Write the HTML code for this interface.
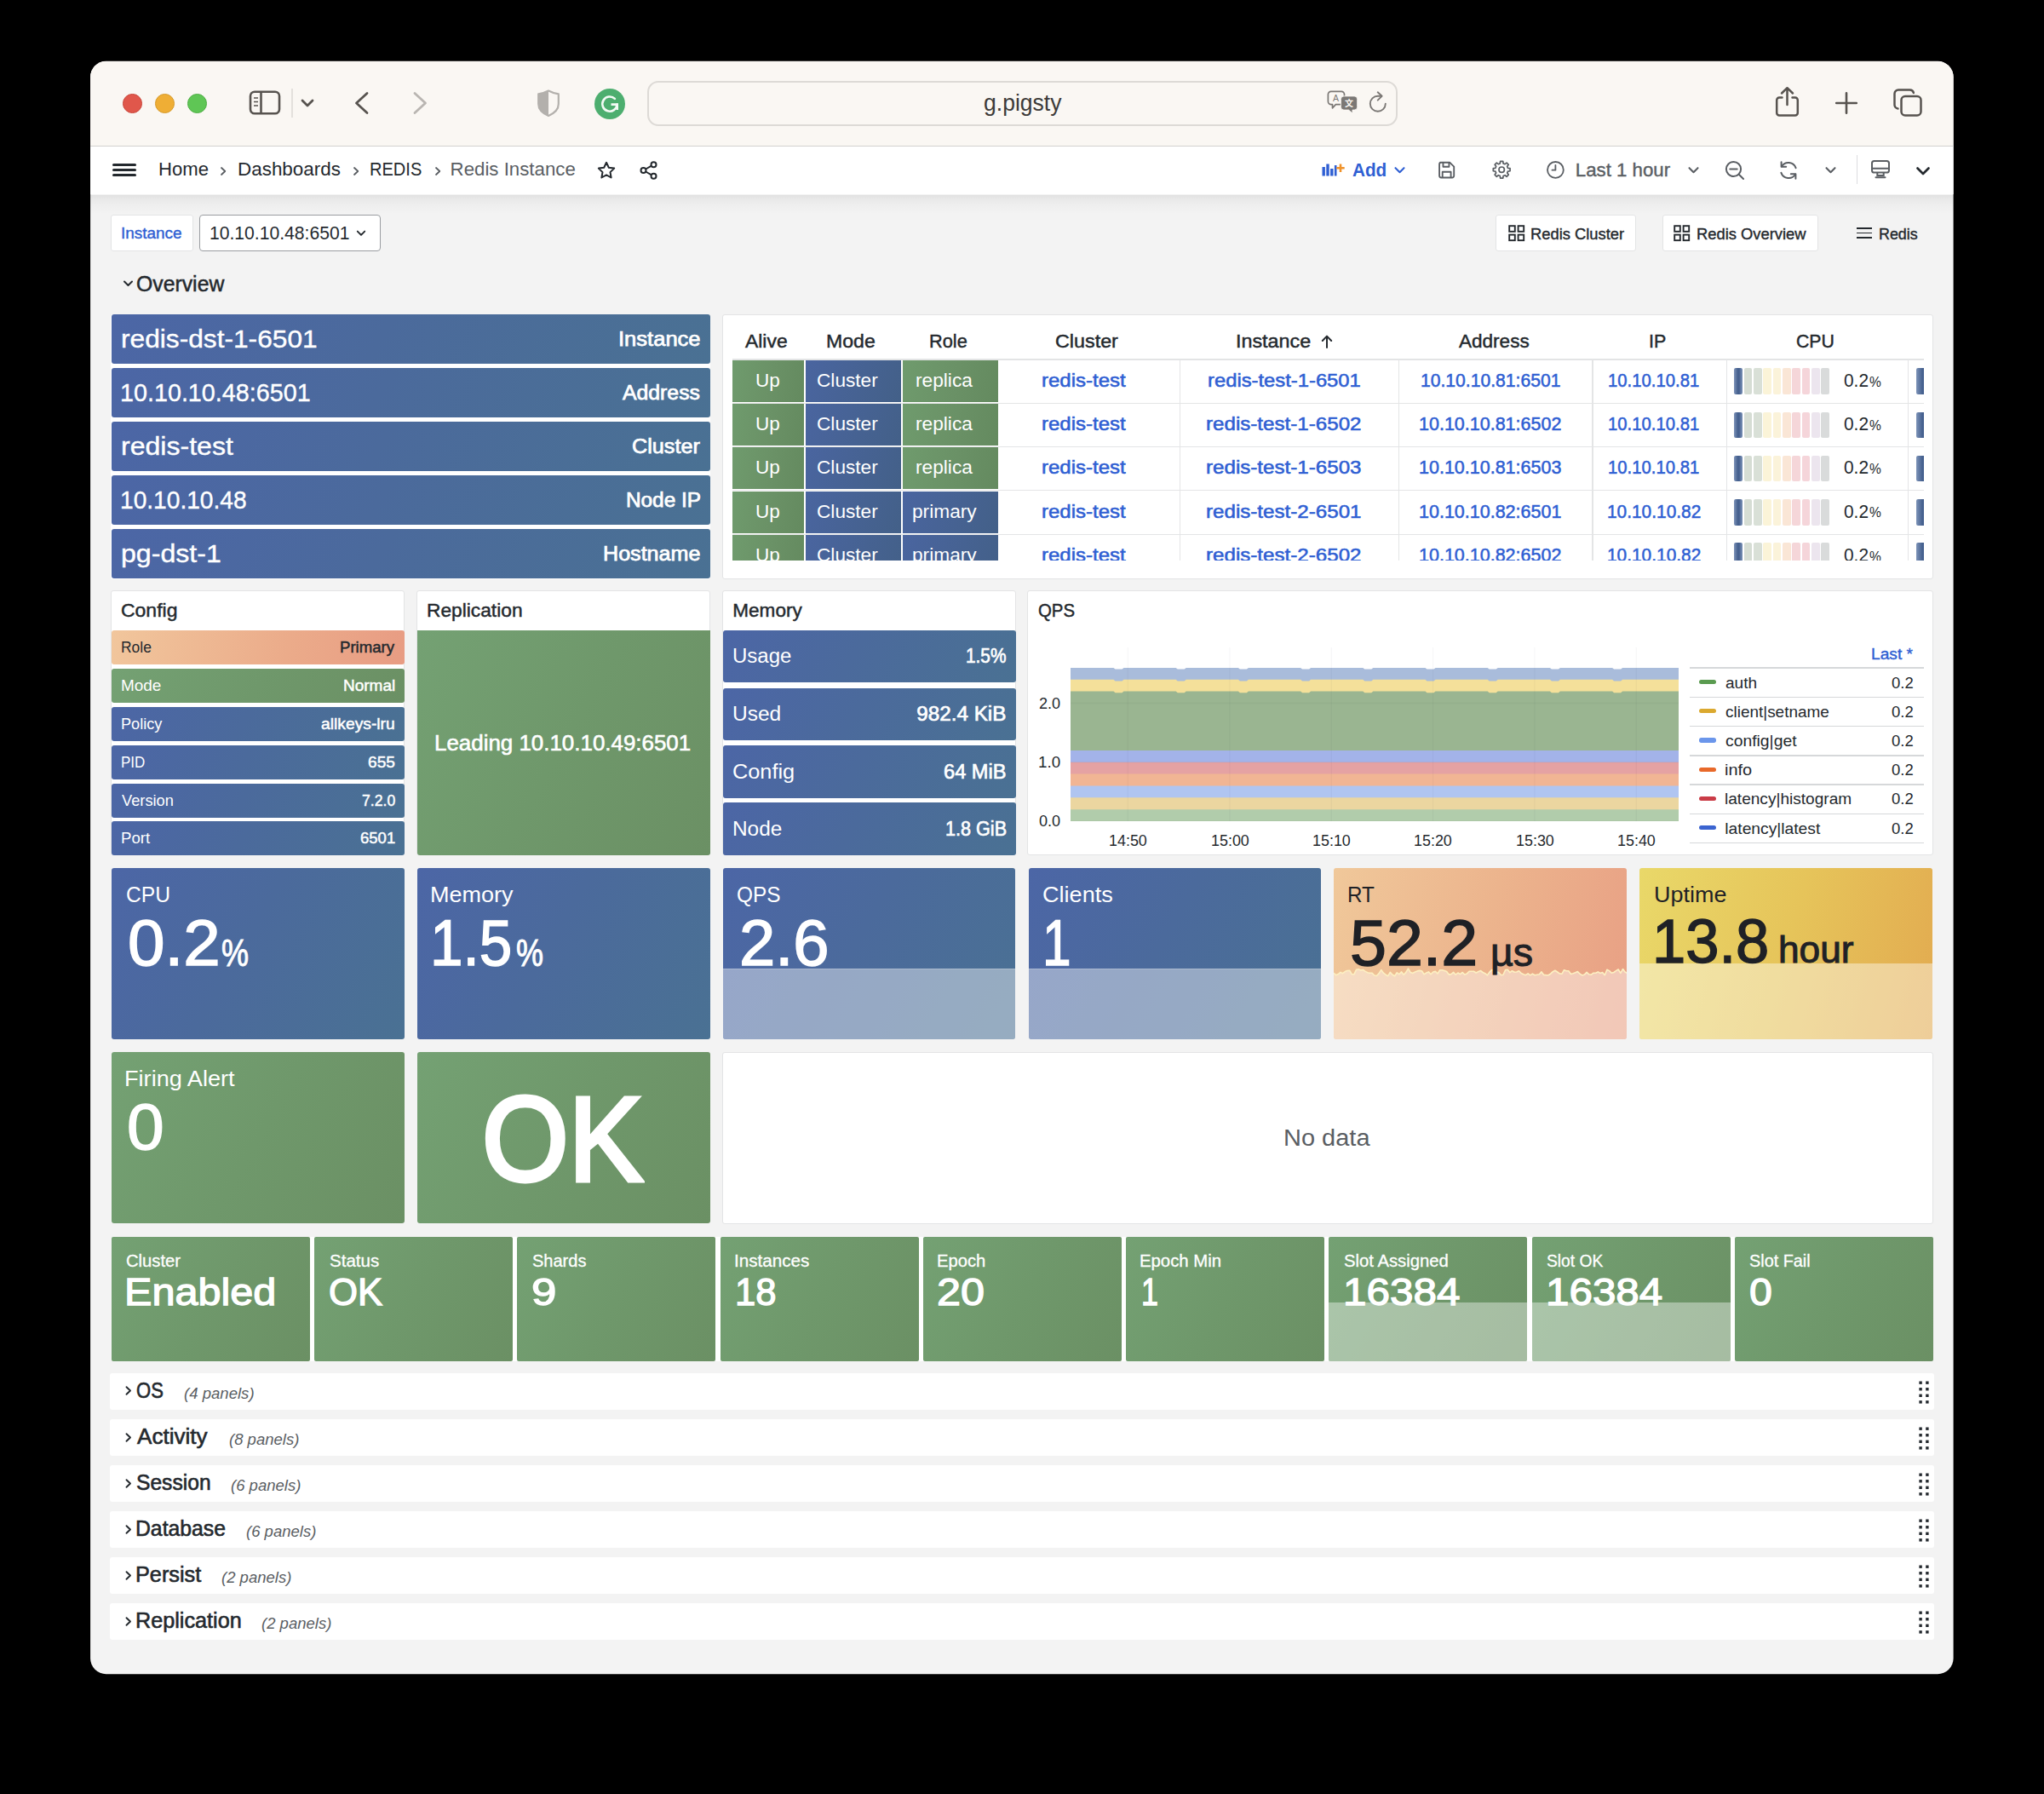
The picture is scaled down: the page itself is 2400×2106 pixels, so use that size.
<!DOCTYPE html>
<html lang="en"><head><meta charset="utf-8"><title>Redis Instance - Dashboards - Grafana</title>
<style>
html,body{margin:0;padding:0;background:#000;}
body{width:2400px;height:2106px;position:relative;overflow:hidden;font-family:"Liberation Sans", sans-serif;}
div,svg,span.t{position:absolute;box-sizing:border-box;}
span.t{white-space:pre;line-height:1;}
.bl{background:linear-gradient(120deg,#4c66a6 0%,#4b6a9c 45%,#4a7193 100%);}
.gr{background:linear-gradient(120deg,#74a173 0%,#6f986b 50%,#6b9064 100%);}
.grt{background:linear-gradient(100deg,#6f9b6d 0%,#6a9166 55%,#648a5f 100%);}
.pn{background:#fff;border:1.5px solid #e3e4e5;border-radius:3px;}
</style></head>
<body>
<div id="win" style="left:0;top:0;width:2400px;height:2106px;background:#f3f3f3;clip-path:inset(71.8px 106.4px 140.8px 106.1px round 18.5px);">
<div style="left:106.0px;top:72.0px;width:2188.0px;height:100.0px;background:#faf7f3;border-bottom:1.5px solid #d3d1ce;"></div>
<div style="left:144.4px;top:110.0px;width:22.8px;height:22.8px;background:#e0574b;border:1px solid #c9463b;border-radius:50%;"></div>
<div style="left:182.2px;top:110.0px;width:22.8px;height:22.8px;background:#efae35;border:1px solid #d69a2a;border-radius:50%;"></div>
<div style="left:220.1px;top:110.0px;width:22.8px;height:22.8px;background:#5fc655;border:1px solid #4fae45;border-radius:50%;"></div>
<svg style="left:290.0px;top:103.0px" width="42.0" height="34.0" viewBox="0 0 42 34" ><rect x="4" y="4.7" width="34" height="25.5" rx="5" fill="none" stroke="#57534f" stroke-width="2.6"/><path d="M16.5 5v25" stroke="#57534f" stroke-width="2.6"/><path d="M8 12h5M8 16.5h5M8 21h5" stroke="#57534f" stroke-width="1.6"/></svg>
<div style="left:342.0px;top:104.0px;width:1.5px;height:34.0px;background:#e3e0dc;"></div>
<svg style="left:352.0px;top:114.0px" width="18.0" height="14.0" viewBox="0 0 18 14" ><path d="M3 4l6 6 6-6" fill="none" stroke="#57534f" stroke-width="2.8" stroke-linecap="round" stroke-linejoin="round"/></svg>
<svg style="left:412.0px;top:104.0px" width="26.0" height="34.0" viewBox="0 0 26 34" ><path d="M19 5.5L6.5 17 19 28.5" fill="none" stroke="#57534f" stroke-width="2.8" stroke-linecap="round" stroke-linejoin="round"/></svg>
<svg style="left:480.0px;top:104.0px" width="26.0" height="34.0" viewBox="0 0 26 34" ><path d="M7 5.5L19.5 17 7 28.5" fill="none" stroke="#b9b5b1" stroke-width="2.8" stroke-linecap="round" stroke-linejoin="round"/></svg>
<svg style="left:628.0px;top:103.0px" width="32.0" height="36.0" viewBox="0 0 32 36" ><path d="M16 3.5C12 5.6 8 6.8 4.2 7.4V19c0 6.5 5 11 11.8 14 6.8-3 11.8-7.5 11.8-14V7.4C24 6.8 20 5.6 16 3.5z" fill="none" stroke="#b3b0ac" stroke-width="2.2" stroke-linejoin="round"/><path d="M16 3.5C12 5.6 8 6.8 4.2 7.4V19c0 6.5 5 11 11.8 14z" fill="#b3b0ac"/></svg>
<svg style="left:697.0px;top:103.0px" width="38.0" height="38.0" viewBox="0 0 38 38" ><circle cx="19" cy="19" r="18" fill="#4dae6f"/><path d="M27.5 19.5a8.6 8.6 0 1 1-2.6-6.6" fill="none" stroke="#f3faf5" stroke-width="2.6" stroke-linecap="round"/><path d="M20.5 19.6h7.2v6.5" fill="none" stroke="#f3faf5" stroke-width="2.6" stroke-linejoin="miter"/></svg>
<div style="left:759.5px;top:94.6px;width:881.0px;height:53.4px;background:#faf7f3;border:2px solid #dddad6;border-radius:13px;"></div>
<span class="t" style="font-size:26.91px;color:#3d3b39;top:108.2px;left:1154.8px;transform-origin:0 50%;transform:scaleX(0.986);">g.pigsty</span>
<svg style="left:1558.0px;top:105.0px" width="38.0" height="30.0" viewBox="0 0 38 30" ><path d="M4.9 2.3h12.1a3.5 3.5 0 0 1 3.5 3.5v8.3a3.5 3.5 0 0 1-3.5 3.5h-6.6l-3.9 4.2v-4.2H4.9a3.5 3.5 0 0 1-3.5-3.5V5.8a3.5 3.5 0 0 1 3.5-3.5z" fill="none" stroke="#7b7875" stroke-width="1.7" stroke-linejoin="round"/><path d="M19.9 7.9h12.3a3.5 3.5 0 0 1 3.5 3.5v9.2a3.5 3.5 0 0 1-3.5 3.5h-2.2v3.9l-4.4-3.9h-5.7a3.5 3.5 0 0 1-3.5-3.5v-9.2a3.5 3.5 0 0 1 3.5-3.5z" fill="#7b7875" stroke="#faf7f3" stroke-width="0.9"/><text x="10.6" y="14.2" font-size="10.5" font-family="Liberation Sans, sans-serif" fill="#7b7875" text-anchor="middle">A</text><text x="26.1" y="20.4" font-size="10" font-family="Liberation Sans, Noto Sans CJK SC, sans-serif" font-weight="700" fill="#faf7f3" text-anchor="middle">文</text></svg>
<svg style="left:1604.0px;top:105.0px" width="28.0" height="30.0" viewBox="0 0 28 30" ><path d="M22.8 16.7A9 9 0 1 1 13.8 7.7H18.2" fill="none" stroke="#7b7875" stroke-width="1.9" stroke-linecap="round"/><path d="M13.7 3.3l4.9 4.5-4.9 4.9" fill="none" stroke="#7b7875" stroke-width="1.9" stroke-linecap="round" stroke-linejoin="round"/></svg>
<svg style="left:2081.0px;top:99.0px" width="35.0" height="40.0" viewBox="0 0 35 40" ><path d="M11.5 15.5H8.2a3 3 0 0 0-3 3v15a3 3 0 0 0 3 3h18.6a3 3 0 0 0 3-3v-15a3 3 0 0 0-3-3h-3.3" fill="none" stroke="#57534f" stroke-width="2.5" stroke-linecap="round"/><path d="M17.5 24V4.5M11 10.5l6.5-6.3 6.5 6.3" fill="none" stroke="#57534f" stroke-width="2.5" stroke-linecap="round" stroke-linejoin="round"/></svg>
<svg style="left:2153.0px;top:105.5px" width="30.0" height="30.0" viewBox="0 0 30 30" ><path d="M15 3.2v23.6M3.2 15h23.6" stroke="#57534f" stroke-width="2.6" stroke-linecap="round"/></svg>
<svg style="left:2221.0px;top:102.0px" width="38.0" height="36.0" viewBox="0 0 38 36" ><rect x="11.5" y="11" width="23" height="22.5" rx="4.5" fill="none" stroke="#57534f" stroke-width="2.5"/><path d="M7.5 25.5a4.5 4.5 0 0 1-4-4.5V8a4.5 4.5 0 0 1 4.5-4.5h13.5a4.5 4.5 0 0 1 4.4 3.6" fill="none" stroke="#57534f" stroke-width="2.5" stroke-linecap="round"/></svg>
<div style="left:106.0px;top:172.2px;width:2188.0px;height:56.3px;background:#fff;"></div>
<div style="left:106.0px;top:228.5px;width:2188.0px;height:22.0px;background:linear-gradient(rgba(0,0,0,0.075) 0%,rgba(0,0,0,0.045) 22%,rgba(0,0,0,0.018) 55%,rgba(0,0,0,0) 100%);"></div>
<div style="left:131.9px;top:191.6px;width:28.4px;height:3.0px;background:#24292e;border-radius:1.5px;"></div>
<div style="left:131.9px;top:198.0px;width:28.4px;height:3.0px;background:#24292e;border-radius:1.5px;"></div>
<div style="left:131.9px;top:204.4px;width:28.4px;height:3.0px;background:#24292e;border-radius:1.5px;"></div>
<span class="t" style="font-size:22.25px;color:#24292e;top:188.2px;left:185.7px;transform-origin:0 50%;transform:scaleX(0.993);">Home</span>
<span class="t" style="font-size:22.25px;color:#24292e;top:188.2px;left:278.5px;transform-origin:0 50%;transform:scaleX(1.008);">Dashboards</span>
<span class="t" style="font-size:22.25px;color:#24292e;top:188.2px;left:433.7px;transform-origin:0 50%;transform:scaleX(0.901);">REDIS</span>
<span class="t" style="font-size:22.25px;color:#5a5e63;top:188.2px;left:528.6px;">Redis Instance</span>
<svg style="left:256.1px;top:193.2px" width="12.0" height="16.0" viewBox="0 0 12 16" ><path d="M4 4L8.3 8 4 12" fill="none" stroke="#5a5e63" stroke-width="1.8" stroke-linecap="round" stroke-linejoin="round"/></svg>
<svg style="left:412.4px;top:193.2px" width="12.0" height="16.0" viewBox="0 0 12 16" ><path d="M4 4L8.3 8 4 12" fill="none" stroke="#5a5e63" stroke-width="1.8" stroke-linecap="round" stroke-linejoin="round"/></svg>
<svg style="left:507.5px;top:193.2px" width="12.0" height="16.0" viewBox="0 0 12 16" ><path d="M4 4L8.3 8 4 12" fill="none" stroke="#5a5e63" stroke-width="1.8" stroke-linecap="round" stroke-linejoin="round"/></svg>
<svg style="left:699.5px;top:187.5px" width="24.0" height="24.0" viewBox="0 0 24 24" ><path d="M12 2.8l2.8 5.9 6.4.9-4.7 4.5 1.1 6.4L12 17.4l-5.6 3.1 1.1-6.4L2.8 9.6l6.4-.9z" fill="none" stroke="#24292e" stroke-width="2" stroke-linejoin="round"/></svg>
<svg style="left:749.5px;top:187.5px" width="24.0" height="24.0" viewBox="0 0 24 24" ><circle cx="17.5" cy="5.2" r="3" fill="none" stroke="#24292e" stroke-width="2"/><circle cx="5.5" cy="12" r="3" fill="none" stroke="#24292e" stroke-width="2"/><circle cx="17.5" cy="18.8" r="3" fill="none" stroke="#24292e" stroke-width="2"/><path d="M8.2 10.5l6.6-3.8M8.2 13.5l6.6 3.8" stroke="#24292e" stroke-width="2"/></svg>
<svg style="left:1552.0px;top:189.0px" width="28.0" height="20.0" viewBox="0 0 28 20" ><rect x="0.5" y="7" width="3.4" height="10.5" fill="#2f5fd3"/><rect x="5.3" y="3.5" width="3.4" height="14" fill="#2f5fd3"/><rect x="10.1" y="9" width="3.4" height="8.5" fill="#2f5fd3"/><rect x="14.9" y="5" width="2.6" height="12.5" fill="#2f5fd3"/><path d="M22 3.5v9.5M17.3 8.2h9.4" stroke="#f0932b" stroke-width="2.6"/></svg>
<span class="t" style="font-size:22.25px;color:#2f5fd3;font-weight:700;top:188.8px;left:1587.6px;transform-origin:0 50%;transform:scaleX(0.931);">Add</span>
<svg style="left:1635.5px;top:193.0px" width="15.0" height="14.0" viewBox="0 0 15 14" ><path d="M2.5 4.2l5 5 5-5" fill="none" stroke="#2f5fd3" stroke-width="2.1" stroke-linecap="round" stroke-linejoin="round"/></svg>
<svg style="left:1687.4px;top:187.7px" width="23.3" height="23.3" viewBox="0 0 25 25" ><path d="M4.3 3h12.2l5.2 5.2v11.5a2.3 2.3 0 0 1-2.3 2.3H5.6a2.3 2.3 0 0 1-2.3-2.3V5.3A2.3 2.3 0 0 1 5.6 3z" fill="none" stroke="#5a5e63" stroke-width="2" stroke-linejoin="round"/><path d="M8 3v5.3h7.5V3M7.2 22v-7.2h10.6V22" fill="none" stroke="#5a5e63" stroke-width="2" stroke-linejoin="round"/></svg>
<svg style="left:1752.2px;top:188.0px" width="22.4" height="22.4" viewBox="0 0 26 26" ><path d="M11.19 1.54 L14.81 1.54 L15.19 4.48 L17.48 5.43 L19.82 3.62 L22.38 6.18 L20.57 8.52 L21.52 10.81 L24.46 11.19 L24.46 14.81 L21.52 15.19 L20.57 17.48 L22.38 19.82 L19.82 22.38 L17.48 20.57 L15.19 21.52 L14.81 24.46 L11.19 24.46 L10.81 21.52 L8.52 20.57 L6.18 22.38 L3.62 19.82 L5.43 17.48 L4.48 15.19 L1.54 14.81 L1.54 11.19 L4.48 10.81 L5.43 8.52 L3.62 6.18 L6.18 3.62 L8.52 5.43 L10.81 4.48Z" fill="none" stroke="#5a5e63" stroke-width="2" stroke-linejoin="round"/><circle cx="13" cy="13" r="3.7" fill="none" stroke="#5a5e63" stroke-width="2"/></svg>
<svg style="left:1814.6px;top:187.8px" width="22.8" height="22.8" viewBox="0 0 25 25" ><circle cx="12.5" cy="12.5" r="10.3" fill="none" stroke="#5a5e63" stroke-width="2"/><path d="M12.5 6.5v6.3H8.2" fill="none" stroke="#5a5e63" stroke-width="2" stroke-linecap="round" stroke-linejoin="round"/></svg>
<span class="t" style="font-size:22.25px;color:#5a5e63;-webkit-text-stroke:0.4px #5a5e63;top:188.8px;left:1849.8px;">Last 1 hour</span>
<svg style="left:1981.0px;top:193.0px" width="15.0" height="14.0" viewBox="0 0 15 14" ><path d="M2.5 4.2l5 5 5-5" fill="none" stroke="#5a5e63" stroke-width="2.1" stroke-linecap="round" stroke-linejoin="round"/></svg>
<svg style="left:2024.0px;top:187.0px" width="26.0" height="26.0" viewBox="0 0 26 26" ><circle cx="11.5" cy="11.5" r="8.6" fill="none" stroke="#5a5e63" stroke-width="2"/><path d="M7.3 11.5h8.4M18 18l5 5" stroke="#5a5e63" stroke-width="2" stroke-linecap="round"/></svg>
<svg style="left:2087.0px;top:187.0px" width="26.0" height="26.0" viewBox="0 0 26 26" ><path d="M21.6 10.2A9.3 9.3 0 0 0 5 8.3M4.4 15.8A9.3 9.3 0 0 0 21 17.7" fill="none" stroke="#5a5e63" stroke-width="2" stroke-linecap="round"/><path d="M4.6 3.2v5.6h5.6M21.4 22.8v-5.6h-5.6" fill="none" stroke="#5a5e63" stroke-width="2" stroke-linecap="round" stroke-linejoin="round"/></svg>
<svg style="left:2142.0px;top:193.0px" width="15.0" height="14.0" viewBox="0 0 15 14" ><path d="M2.5 4.2l5 5 5-5" fill="none" stroke="#5a5e63" stroke-width="2.1" stroke-linecap="round" stroke-linejoin="round"/></svg>
<div style="left:2179.6px;top:182.3px;width:1.5px;height:34.0px;background:#dcdde0;"></div>
<svg style="left:2195.0px;top:186.0px" width="26.0" height="26.0" viewBox="0 0 26 26" ><rect x="3" y="3" width="20" height="13.5" rx="2.6" fill="none" stroke="#5a5e63" stroke-width="2"/><path d="M3 11.8h20" stroke="#5a5e63" stroke-width="2"/><path d="M9.3 16.5v3.6h7.4v-3.6" fill="none" stroke="#5a5e63" stroke-width="2"/><path d="M7.5 22.3h11" stroke="#5a5e63" stroke-width="2" stroke-linecap="round"/></svg>
<svg style="left:2247.5px;top:193.0px" width="20.0" height="16.0" viewBox="0 0 20 16" ><path d="M3.5 4.5l6.5 6.5 6.5-6.5" fill="none" stroke="#24292e" stroke-width="2.7" stroke-linecap="round" stroke-linejoin="round"/></svg>
<div style="left:129.7px;top:251.8px;width:97.2px;height:43.2px;background:#fff;border:1.5px solid #e3e4e5;border-radius:3px;"></div>
<span class="t" style="font-size:19.04px;color:#2f5fd3;-webkit-text-stroke:0.4px #2f5fd3;top:264.4px;left:141.9px;transform-origin:0 50%;transform:scaleX(0.995);">Instance</span>
<div style="left:234.0px;top:251.5px;width:213.0px;height:43.6px;background:#fff;border:1.8px solid #9a9da1;border-radius:4px;"></div>
<span class="t" style="font-size:22.25px;color:#24292e;top:263.2px;left:245.9px;transform-origin:0 50%;transform:scaleX(0.949);">10.10.10.48:6501</span>
<svg style="left:417.0px;top:268.0px" width="14.0" height="12.0" viewBox="0 0 14 12" ><path d="M2.8 3.6l4.2 4.2 4.2-4.2" fill="none" stroke="#24292e" stroke-width="1.9" stroke-linecap="round" stroke-linejoin="round"/></svg>
<div style="left:1756.4px;top:251.8px;width:165.0px;height:43.2px;background:#fff;border:1.5px solid #e3e4e5;border-radius:3px;"></div>
<svg style="left:1771.2px;top:263.5px" width="20.0" height="20.0" viewBox="0 0 20 20" ><rect x="1.2" y="1.2" width="6.6" height="6.6" fill="none" stroke="#24292e" stroke-width="1.9"/><rect x="1.2" y="11.6" width="6.6" height="6.6" fill="none" stroke="#24292e" stroke-width="1.9"/><rect x="11.6" y="1.2" width="6.6" height="6.6" fill="none" stroke="#24292e" stroke-width="1.9"/><rect x="11.6" y="11.6" width="6.6" height="6.6" fill="none" stroke="#24292e" stroke-width="1.9"/></svg>
<span class="t" style="font-size:19.04px;color:#24292e;-webkit-text-stroke:0.4px #24292e;top:264.6px;left:1796.7px;transform-origin:0 50%;transform:scaleX(0.964);">Redis Cluster</span>
<div style="left:1951.5px;top:251.8px;width:183.5px;height:43.2px;background:#fff;border:1.5px solid #e3e4e5;border-radius:3px;"></div>
<svg style="left:1965.0px;top:263.5px" width="20.0" height="20.0" viewBox="0 0 20 20" ><rect x="1.2" y="1.2" width="6.6" height="6.6" fill="none" stroke="#24292e" stroke-width="1.9"/><rect x="1.2" y="11.6" width="6.6" height="6.6" fill="none" stroke="#24292e" stroke-width="1.9"/><rect x="11.6" y="1.2" width="6.6" height="6.6" fill="none" stroke="#24292e" stroke-width="1.9"/><rect x="11.6" y="11.6" width="6.6" height="6.6" fill="none" stroke="#24292e" stroke-width="1.9"/></svg>
<span class="t" style="font-size:19.04px;color:#24292e;-webkit-text-stroke:0.4px #24292e;top:264.6px;left:1991.8px;transform-origin:0 50%;transform:scaleX(0.964);">Redis Overview</span>
<div style="left:2179.7px;top:266.9px;width:18.7px;height:1.9px;background:#24292e;"></div>
<div style="left:2179.7px;top:272.5px;width:18.7px;height:1.9px;background:#24292e;"></div>
<div style="left:2179.7px;top:278.1px;width:18.7px;height:1.9px;background:#24292e;"></div>
<span class="t" style="font-size:19.04px;color:#24292e;-webkit-text-stroke:0.4px #24292e;top:264.6px;left:2205.6px;transform-origin:0 50%;transform:scaleX(0.940);">Redis</span>
<svg style="left:142.5px;top:326.0px" width="15.0" height="14.0" viewBox="0 0 15 14" ><path d="M3 4.5l4.5 4.5 4.5-4.5" fill="none" stroke="#24292e" stroke-width="2" stroke-linecap="round" stroke-linejoin="round"/></svg>
<span class="t" style="font-size:25.46px;color:#24292e;-webkit-text-stroke:0.5px #24292e;top:321.4px;left:160.3px;transform-origin:0 50%;transform:scaleX(0.974);">Overview</span>
<div style="left:130.0px;top:368.8px;width:704.0px;height:311.0px;background:#fff;border-radius:3px;"></div>
<div class="bl" style="left:130.7px;top:369.2px;width:703.0px;height:58.2px;border-radius:3px;"></div>
<span class="t" style="font-size:29.81px;color:#fff;-webkit-text-stroke:0.4px #fff;top:383.0px;left:141.6px;transform-origin:0 50%;transform:scaleX(1.063);">redis-dst-1-6501</span>
<span class="t" style="font-size:24.43px;color:#fff;-webkit-text-stroke:0.75px #fff;top:385.9px;left:726.2px;transform-origin:0 50%;transform:scaleX(1.046);">Instance</span>
<div class="bl" style="left:130.7px;top:432.1px;width:703.0px;height:58.2px;border-radius:3px;"></div>
<span class="t" style="font-size:29.81px;color:#fff;-webkit-text-stroke:0.4px #fff;top:445.9px;left:140.8px;transform-origin:0 50%;transform:scaleX(0.964);">10.10.10.48:6501</span>
<span class="t" style="font-size:24.43px;color:#fff;-webkit-text-stroke:0.75px #fff;top:448.8px;left:731.4px;transform-origin:0 50%;transform:scaleX(1.015);">Address</span>
<div class="bl" style="left:130.7px;top:495.0px;width:703.0px;height:58.2px;border-radius:3px;"></div>
<span class="t" style="font-size:29.81px;color:#fff;-webkit-text-stroke:0.4px #fff;top:508.8px;left:141.6px;transform-origin:0 50%;transform:scaleX(1.076);">redis-test</span>
<span class="t" style="font-size:24.43px;color:#fff;-webkit-text-stroke:0.75px #fff;top:511.7px;left:742.3px;transform-origin:0 50%;transform:scaleX(1.033);">Cluster</span>
<div class="bl" style="left:130.7px;top:557.9px;width:703.0px;height:58.2px;border-radius:3px;"></div>
<span class="t" style="font-size:29.81px;color:#fff;-webkit-text-stroke:0.4px #fff;top:571.7px;left:140.8px;transform-origin:0 50%;transform:scaleX(0.944);">10.10.10.48</span>
<span class="t" style="font-size:24.43px;color:#fff;-webkit-text-stroke:0.75px #fff;top:574.6px;left:734.9px;">Node IP</span>
<div class="bl" style="left:130.7px;top:620.8px;width:703.0px;height:58.2px;border-radius:3px;"></div>
<span class="t" style="font-size:29.81px;color:#fff;-webkit-text-stroke:0.4px #fff;top:634.6px;left:141.6px;transform-origin:0 50%;transform:scaleX(1.078);">pg-dst-1</span>
<span class="t" style="font-size:24.43px;color:#fff;-webkit-text-stroke:0.75px #fff;top:637.5px;left:708.3px;transform-origin:0 50%;transform:scaleX(1.028);">Hostname</span>
<div class="pn" style="left:847.5px;top:368.8px;width:1422.0px;height:311.0px;"></div>
<span class="t" style="font-size:22.25px;color:#24292e;-webkit-text-stroke:0.45px #24292e;top:389.9px;left:875.2px;transform-origin:0 50%;transform:scaleX(1.029);">Alive</span>
<span class="t" style="font-size:22.25px;color:#24292e;-webkit-text-stroke:0.45px #24292e;top:389.9px;left:970.1px;transform-origin:0 50%;transform:scaleX(1.038);">Mode</span>
<span class="t" style="font-size:22.25px;color:#24292e;-webkit-text-stroke:0.45px #24292e;top:389.9px;left:1090.6px;transform-origin:0 50%;transform:scaleX(0.979);">Role</span>
<span class="t" style="font-size:22.25px;color:#24292e;-webkit-text-stroke:0.45px #24292e;top:389.9px;left:1239.4px;transform-origin:0 50%;transform:scaleX(1.048);">Cluster</span>
<span class="t" style="font-size:22.25px;color:#24292e;-webkit-text-stroke:0.45px #24292e;top:389.9px;left:1451.2px;transform-origin:0 50%;transform:scaleX(1.048);">Instance</span>
<span class="t" style="font-size:22.25px;color:#24292e;-webkit-text-stroke:0.45px #24292e;top:389.9px;left:1712.9px;transform-origin:0 50%;transform:scaleX(1.013);">Address</span>
<span class="t" style="font-size:22.25px;color:#24292e;-webkit-text-stroke:0.45px #24292e;top:389.9px;left:1935.7px;transform-origin:0 50%;transform:scaleX(0.965);">IP</span>
<span class="t" style="font-size:22.25px;color:#24292e;-webkit-text-stroke:0.45px #24292e;top:389.9px;left:2108.9px;transform-origin:0 50%;transform:scaleX(0.956);">CPU</span>
<svg style="left:1549.0px;top:391.0px" width="18.0" height="20.0" viewBox="0 0 18 20" ><path d="M9 17V4M3.8 9L9 3.6 14.2 9" fill="none" stroke="#24292e" stroke-width="2" stroke-linecap="round" stroke-linejoin="round"/></svg>
<div style="left:860px;top:421px;width:1398.7px;height:237.4px;overflow:hidden;">
<div style="left:0.0px;top:0.0px;width:1398.7px;height:1.5px;background:#e3e4e5;"></div>
<div class="grt" style="left:0.1px;top:1.8px;width:83.8px;height:49.2px;"></div>
<div style="left:85.8px;top:1.8px;width:112.2px;height:49.2px;background:linear-gradient(110deg,#4a65a0,#436088);"></div>
<div class="grt" style="left:199.9px;top:1.8px;width:111.8px;height:49.2px;"></div>
<div style="left:0.0px;top:51.7px;width:1398.7px;height:1.3px;background:#e4e5e6;"></div>
<div style="left:1176.4px;top:11.4px;width:9.8px;height:30.6px;background:linear-gradient(90deg,#7d93b8,#46618f 45%,#46618f 60%,#7d93b8);border-radius:2px;"></div>
<div style="left:1187.7px;top:11.4px;width:9.8px;height:30.6px;background:#d6ddd4;border-radius:2px;"></div>
<div style="left:1199.0px;top:11.4px;width:9.8px;height:30.6px;background:#d9e0d7;border-radius:2px;"></div>
<div style="left:1210.3px;top:11.4px;width:9.8px;height:30.6px;background:#fbf4d8;border-radius:2px;"></div>
<div style="left:1221.6px;top:11.4px;width:9.8px;height:30.6px;background:#fbf3da;border-radius:2px;"></div>
<div style="left:1232.9px;top:11.4px;width:9.8px;height:30.6px;background:#fae6d6;border-radius:2px;"></div>
<div style="left:1244.2px;top:11.4px;width:9.8px;height:30.6px;background:#f5d6d9;border-radius:2px;"></div>
<div style="left:1255.5px;top:11.4px;width:9.8px;height:30.6px;background:#f5d5da;border-radius:2px;"></div>
<div style="left:1266.8px;top:11.4px;width:9.8px;height:30.6px;background:#ece5ee;border-radius:2px;"></div>
<div style="left:1278.1px;top:11.4px;width:9.8px;height:30.6px;background:#d9dbdb;border-radius:2px;"></div>
<div style="left:1389.7px;top:11.4px;width:12.0px;height:30.6px;background:linear-gradient(90deg,#7d93b8,#46618f 60%);border-radius:2px;"></div>
<div class="grt" style="left:0.1px;top:53.0px;width:83.8px;height:49.2px;"></div>
<div style="left:85.8px;top:53.0px;width:112.2px;height:49.2px;background:linear-gradient(110deg,#4a65a0,#436088);"></div>
<div class="grt" style="left:199.9px;top:53.0px;width:111.8px;height:49.2px;"></div>
<div style="left:0.0px;top:102.9px;width:1398.7px;height:1.3px;background:#e4e5e6;"></div>
<div style="left:1176.4px;top:62.6px;width:9.8px;height:30.6px;background:linear-gradient(90deg,#7d93b8,#46618f 45%,#46618f 60%,#7d93b8);border-radius:2px;"></div>
<div style="left:1187.7px;top:62.6px;width:9.8px;height:30.6px;background:#d6ddd4;border-radius:2px;"></div>
<div style="left:1199.0px;top:62.6px;width:9.8px;height:30.6px;background:#d9e0d7;border-radius:2px;"></div>
<div style="left:1210.3px;top:62.6px;width:9.8px;height:30.6px;background:#fbf4d8;border-radius:2px;"></div>
<div style="left:1221.6px;top:62.6px;width:9.8px;height:30.6px;background:#fbf3da;border-radius:2px;"></div>
<div style="left:1232.9px;top:62.6px;width:9.8px;height:30.6px;background:#fae6d6;border-radius:2px;"></div>
<div style="left:1244.2px;top:62.6px;width:9.8px;height:30.6px;background:#f5d6d9;border-radius:2px;"></div>
<div style="left:1255.5px;top:62.6px;width:9.8px;height:30.6px;background:#f5d5da;border-radius:2px;"></div>
<div style="left:1266.8px;top:62.6px;width:9.8px;height:30.6px;background:#ece5ee;border-radius:2px;"></div>
<div style="left:1278.1px;top:62.6px;width:9.8px;height:30.6px;background:#d9dbdb;border-radius:2px;"></div>
<div style="left:1389.7px;top:62.6px;width:12.0px;height:30.6px;background:linear-gradient(90deg,#7d93b8,#46618f 60%);border-radius:2px;"></div>
<div class="grt" style="left:0.1px;top:104.3px;width:83.8px;height:49.2px;"></div>
<div style="left:85.8px;top:104.3px;width:112.2px;height:49.2px;background:linear-gradient(110deg,#4a65a0,#436088);"></div>
<div class="grt" style="left:199.9px;top:104.3px;width:111.8px;height:49.2px;"></div>
<div style="left:0.0px;top:154.2px;width:1398.7px;height:1.3px;background:#e4e5e6;"></div>
<div style="left:1176.4px;top:113.9px;width:9.8px;height:30.6px;background:linear-gradient(90deg,#7d93b8,#46618f 45%,#46618f 60%,#7d93b8);border-radius:2px;"></div>
<div style="left:1187.7px;top:113.9px;width:9.8px;height:30.6px;background:#d6ddd4;border-radius:2px;"></div>
<div style="left:1199.0px;top:113.9px;width:9.8px;height:30.6px;background:#d9e0d7;border-radius:2px;"></div>
<div style="left:1210.3px;top:113.9px;width:9.8px;height:30.6px;background:#fbf4d8;border-radius:2px;"></div>
<div style="left:1221.6px;top:113.9px;width:9.8px;height:30.6px;background:#fbf3da;border-radius:2px;"></div>
<div style="left:1232.9px;top:113.9px;width:9.8px;height:30.6px;background:#fae6d6;border-radius:2px;"></div>
<div style="left:1244.2px;top:113.9px;width:9.8px;height:30.6px;background:#f5d6d9;border-radius:2px;"></div>
<div style="left:1255.5px;top:113.9px;width:9.8px;height:30.6px;background:#f5d5da;border-radius:2px;"></div>
<div style="left:1266.8px;top:113.9px;width:9.8px;height:30.6px;background:#ece5ee;border-radius:2px;"></div>
<div style="left:1278.1px;top:113.9px;width:9.8px;height:30.6px;background:#d9dbdb;border-radius:2px;"></div>
<div style="left:1389.7px;top:113.9px;width:12.0px;height:30.6px;background:linear-gradient(90deg,#7d93b8,#46618f 60%);border-radius:2px;"></div>
<div class="grt" style="left:0.1px;top:155.6px;width:83.8px;height:49.2px;"></div>
<div style="left:85.8px;top:155.6px;width:112.2px;height:49.2px;background:linear-gradient(110deg,#4a65a0,#436088);"></div>
<div style="background:linear-gradient(110deg,#4a65a0,#436088);left:199.9px;top:155.6px;width:111.8px;height:49.2px;"></div>
<div style="left:0.0px;top:205.5px;width:1398.7px;height:1.3px;background:#e4e5e6;"></div>
<div style="left:1176.4px;top:165.2px;width:9.8px;height:30.6px;background:linear-gradient(90deg,#7d93b8,#46618f 45%,#46618f 60%,#7d93b8);border-radius:2px;"></div>
<div style="left:1187.7px;top:165.2px;width:9.8px;height:30.6px;background:#d6ddd4;border-radius:2px;"></div>
<div style="left:1199.0px;top:165.2px;width:9.8px;height:30.6px;background:#d9e0d7;border-radius:2px;"></div>
<div style="left:1210.3px;top:165.2px;width:9.8px;height:30.6px;background:#fbf4d8;border-radius:2px;"></div>
<div style="left:1221.6px;top:165.2px;width:9.8px;height:30.6px;background:#fbf3da;border-radius:2px;"></div>
<div style="left:1232.9px;top:165.2px;width:9.8px;height:30.6px;background:#fae6d6;border-radius:2px;"></div>
<div style="left:1244.2px;top:165.2px;width:9.8px;height:30.6px;background:#f5d6d9;border-radius:2px;"></div>
<div style="left:1255.5px;top:165.2px;width:9.8px;height:30.6px;background:#f5d5da;border-radius:2px;"></div>
<div style="left:1266.8px;top:165.2px;width:9.8px;height:30.6px;background:#ece5ee;border-radius:2px;"></div>
<div style="left:1278.1px;top:165.2px;width:9.8px;height:30.6px;background:#d9dbdb;border-radius:2px;"></div>
<div style="left:1389.7px;top:165.2px;width:12.0px;height:30.6px;background:linear-gradient(90deg,#7d93b8,#46618f 60%);border-radius:2px;"></div>
<div class="grt" style="left:0.1px;top:206.8px;width:83.8px;height:49.2px;"></div>
<div style="left:85.8px;top:206.8px;width:112.2px;height:49.2px;background:linear-gradient(110deg,#4a65a0,#436088);"></div>
<div style="background:linear-gradient(110deg,#4a65a0,#436088);left:199.9px;top:206.8px;width:111.8px;height:49.2px;"></div>
<div style="left:0.0px;top:256.7px;width:1398.7px;height:1.3px;background:#e4e5e6;"></div>
<div style="left:1176.4px;top:216.4px;width:9.8px;height:30.6px;background:linear-gradient(90deg,#7d93b8,#46618f 45%,#46618f 60%,#7d93b8);border-radius:2px;"></div>
<div style="left:1187.7px;top:216.4px;width:9.8px;height:30.6px;background:#d6ddd4;border-radius:2px;"></div>
<div style="left:1199.0px;top:216.4px;width:9.8px;height:30.6px;background:#d9e0d7;border-radius:2px;"></div>
<div style="left:1210.3px;top:216.4px;width:9.8px;height:30.6px;background:#fbf4d8;border-radius:2px;"></div>
<div style="left:1221.6px;top:216.4px;width:9.8px;height:30.6px;background:#fbf3da;border-radius:2px;"></div>
<div style="left:1232.9px;top:216.4px;width:9.8px;height:30.6px;background:#fae6d6;border-radius:2px;"></div>
<div style="left:1244.2px;top:216.4px;width:9.8px;height:30.6px;background:#f5d6d9;border-radius:2px;"></div>
<div style="left:1255.5px;top:216.4px;width:9.8px;height:30.6px;background:#f5d5da;border-radius:2px;"></div>
<div style="left:1266.8px;top:216.4px;width:9.8px;height:30.6px;background:#ece5ee;border-radius:2px;"></div>
<div style="left:1278.1px;top:216.4px;width:9.8px;height:30.6px;background:#d9dbdb;border-radius:2px;"></div>
<div style="left:1389.7px;top:216.4px;width:12.0px;height:30.6px;background:linear-gradient(90deg,#7d93b8,#46618f 60%);border-radius:2px;"></div>
<div style="left:525.1px;top:1.0px;width:1.3px;height:240.0px;background:#e4e5e6;"></div>
<div style="left:781.6px;top:1.0px;width:1.3px;height:240.0px;background:#e4e5e6;"></div>
<div style="left:1009.3px;top:1.0px;width:1.3px;height:240.0px;background:#e4e5e6;"></div>
<div style="left:1166.7px;top:1.0px;width:1.3px;height:240.0px;background:#e4e5e6;"></div>
<div style="left:1380.0px;top:1.0px;width:1.3px;height:240.0px;background:#e4e5e6;"></div>
</div>
<div style="left:0;top:0;width:2400px;height:658.4px;overflow:hidden;">
<span class="t" style="font-size:22.25px;color:#fff;top:435.8px;left:886.5px;transform-origin:0 50%;transform:scaleX(1.012);">Up</span>
<span class="t" style="font-size:22.25px;color:#fff;top:435.8px;left:958.9px;transform-origin:0 50%;transform:scaleX(1.018);">Cluster</span>
<span class="t" style="font-size:22.25px;color:#fff;top:435.8px;left:1074.8px;transform-origin:0 50%;transform:scaleX(1.020);">replica</span>
<span class="t" style="font-size:22.25px;color:#2f5fd3;-webkit-text-stroke:0.55px #2f5fd3;top:435.8px;left:1222.5px;transform-origin:0 50%;transform:scaleX(1.079);">redis-test</span>
<span class="t" style="font-size:22.25px;color:#2f5fd3;-webkit-text-stroke:0.55px #2f5fd3;top:435.8px;left:1417.5px;transform-origin:0 50%;transform:scaleX(1.069);">redis-test-1-6501</span>
<span class="t" style="font-size:22.25px;color:#2f5fd3;-webkit-text-stroke:0.55px #2f5fd3;top:435.8px;left:1667.8px;transform-origin:0 50%;transform:scaleX(0.949);">10.10.10.81:6501</span>
<span class="t" style="font-size:22.25px;color:#2f5fd3;-webkit-text-stroke:0.55px #2f5fd3;top:435.8px;left:1888.2px;transform-origin:0 50%;transform:scaleX(0.912);">10.10.10.81</span>
<span class="t" style="font-size:22.25px;color:#24292e;top:435.8px;left:2164.8px;transform-origin:0 50%;transform:scaleX(0.939);">0.2</span>
<span class="t" style="font-size:16.56px;color:#24292e;top:440.6px;left:2194.5px;transform-origin:0 50%;transform:scaleX(0.940);">%</span>
<span class="t" style="font-size:22.25px;color:#fff;top:487.0px;left:886.5px;transform-origin:0 50%;transform:scaleX(1.012);">Up</span>
<span class="t" style="font-size:22.25px;color:#fff;top:487.0px;left:958.9px;transform-origin:0 50%;transform:scaleX(1.018);">Cluster</span>
<span class="t" style="font-size:22.25px;color:#fff;top:487.0px;left:1074.8px;transform-origin:0 50%;transform:scaleX(1.020);">replica</span>
<span class="t" style="font-size:22.25px;color:#2f5fd3;-webkit-text-stroke:0.55px #2f5fd3;top:487.0px;left:1222.5px;transform-origin:0 50%;transform:scaleX(1.079);">redis-test</span>
<span class="t" style="font-size:22.25px;color:#2f5fd3;-webkit-text-stroke:0.55px #2f5fd3;top:487.0px;left:1416.2px;transform-origin:0 50%;transform:scaleX(1.085);">redis-test-1-6502</span>
<span class="t" style="font-size:22.25px;color:#2f5fd3;-webkit-text-stroke:0.55px #2f5fd3;top:487.0px;left:1666.3px;transform-origin:0 50%;transform:scaleX(0.966);">10.10.10.81:6502</span>
<span class="t" style="font-size:22.25px;color:#2f5fd3;-webkit-text-stroke:0.55px #2f5fd3;top:487.0px;left:1888.2px;transform-origin:0 50%;transform:scaleX(0.912);">10.10.10.81</span>
<span class="t" style="font-size:22.25px;color:#24292e;top:487.0px;left:2164.8px;transform-origin:0 50%;transform:scaleX(0.939);">0.2</span>
<span class="t" style="font-size:16.56px;color:#24292e;top:491.8px;left:2194.5px;transform-origin:0 50%;transform:scaleX(0.940);">%</span>
<span class="t" style="font-size:22.25px;color:#fff;top:538.3px;left:886.5px;transform-origin:0 50%;transform:scaleX(1.012);">Up</span>
<span class="t" style="font-size:22.25px;color:#fff;top:538.3px;left:958.9px;transform-origin:0 50%;transform:scaleX(1.018);">Cluster</span>
<span class="t" style="font-size:22.25px;color:#fff;top:538.3px;left:1074.8px;transform-origin:0 50%;transform:scaleX(1.020);">replica</span>
<span class="t" style="font-size:22.25px;color:#2f5fd3;-webkit-text-stroke:0.55px #2f5fd3;top:538.3px;left:1222.5px;transform-origin:0 50%;transform:scaleX(1.079);">redis-test</span>
<span class="t" style="font-size:22.25px;color:#2f5fd3;-webkit-text-stroke:0.55px #2f5fd3;top:538.3px;left:1416.2px;transform-origin:0 50%;transform:scaleX(1.085);">redis-test-1-6503</span>
<span class="t" style="font-size:22.25px;color:#2f5fd3;-webkit-text-stroke:0.55px #2f5fd3;top:538.3px;left:1666.3px;transform-origin:0 50%;transform:scaleX(0.966);">10.10.10.81:6503</span>
<span class="t" style="font-size:22.25px;color:#2f5fd3;-webkit-text-stroke:0.55px #2f5fd3;top:538.3px;left:1888.2px;transform-origin:0 50%;transform:scaleX(0.912);">10.10.10.81</span>
<span class="t" style="font-size:22.25px;color:#24292e;top:538.3px;left:2164.8px;transform-origin:0 50%;transform:scaleX(0.939);">0.2</span>
<span class="t" style="font-size:16.56px;color:#24292e;top:543.1px;left:2194.5px;transform-origin:0 50%;transform:scaleX(0.940);">%</span>
<span class="t" style="font-size:22.25px;color:#fff;top:589.5px;left:886.5px;transform-origin:0 50%;transform:scaleX(1.012);">Up</span>
<span class="t" style="font-size:22.25px;color:#fff;top:589.5px;left:958.9px;transform-origin:0 50%;transform:scaleX(1.018);">Cluster</span>
<span class="t" style="font-size:22.25px;color:#fff;top:589.5px;left:1070.5px;transform-origin:0 50%;transform:scaleX(1.020);">primary</span>
<span class="t" style="font-size:22.25px;color:#2f5fd3;-webkit-text-stroke:0.55px #2f5fd3;top:589.5px;left:1222.5px;transform-origin:0 50%;transform:scaleX(1.079);">redis-test</span>
<span class="t" style="font-size:22.25px;color:#2f5fd3;-webkit-text-stroke:0.55px #2f5fd3;top:589.5px;left:1416.2px;transform-origin:0 50%;transform:scaleX(1.085);">redis-test-2-6501</span>
<span class="t" style="font-size:22.25px;color:#2f5fd3;-webkit-text-stroke:0.55px #2f5fd3;top:589.5px;left:1666.3px;transform-origin:0 50%;transform:scaleX(0.966);">10.10.10.82:6501</span>
<span class="t" style="font-size:22.25px;color:#2f5fd3;-webkit-text-stroke:0.55px #2f5fd3;top:589.5px;left:1886.6px;transform-origin:0 50%;transform:scaleX(0.938);">10.10.10.82</span>
<span class="t" style="font-size:22.25px;color:#24292e;top:589.5px;left:2164.8px;transform-origin:0 50%;transform:scaleX(0.939);">0.2</span>
<span class="t" style="font-size:16.56px;color:#24292e;top:594.3px;left:2194.5px;transform-origin:0 50%;transform:scaleX(0.940);">%</span>
<span class="t" style="font-size:22.25px;color:#fff;top:640.8px;left:886.5px;transform-origin:0 50%;transform:scaleX(1.012);">Up</span>
<span class="t" style="font-size:22.25px;color:#fff;top:640.8px;left:958.9px;transform-origin:0 50%;transform:scaleX(1.018);">Cluster</span>
<span class="t" style="font-size:22.25px;color:#fff;top:640.8px;left:1070.5px;transform-origin:0 50%;transform:scaleX(1.020);">primary</span>
<span class="t" style="font-size:22.25px;color:#2f5fd3;-webkit-text-stroke:0.55px #2f5fd3;top:640.8px;left:1222.5px;transform-origin:0 50%;transform:scaleX(1.079);">redis-test</span>
<span class="t" style="font-size:22.25px;color:#2f5fd3;-webkit-text-stroke:0.55px #2f5fd3;top:640.8px;left:1416.2px;transform-origin:0 50%;transform:scaleX(1.085);">redis-test-2-6502</span>
<span class="t" style="font-size:22.25px;color:#2f5fd3;-webkit-text-stroke:0.55px #2f5fd3;top:640.8px;left:1666.3px;transform-origin:0 50%;transform:scaleX(0.966);">10.10.10.82:6502</span>
<span class="t" style="font-size:22.25px;color:#2f5fd3;-webkit-text-stroke:0.55px #2f5fd3;top:640.8px;left:1886.6px;transform-origin:0 50%;transform:scaleX(0.938);">10.10.10.82</span>
<span class="t" style="font-size:22.25px;color:#24292e;top:640.8px;left:2164.8px;transform-origin:0 50%;transform:scaleX(0.939);">0.2</span>
<span class="t" style="font-size:16.56px;color:#24292e;top:645.6px;left:2194.5px;transform-origin:0 50%;transform:scaleX(0.940);">%</span>
</div>
<div class="pn" style="left:130.0px;top:693.3px;width:345.3px;height:311.0px;"></div>
<span class="t" style="font-size:22.56px;color:#24292e;-webkit-text-stroke:0.45px #24292e;top:705.5px;left:142.4px;transform-origin:0 50%;transform:scaleX(1.019);">Config</span>
<div style="left:130.7px;top:739.7px;width:344.4px;height:40.0px;background:linear-gradient(100deg,#f1c69c,#ebab8a 60%,#e89c83);border-radius:3px;"></div>
<span class="t" style="font-size:19.25px;color:#24292e;top:749.9px;left:142.1px;transform-origin:0 50%;transform:scaleX(0.905);">Role</span>
<span class="t" style="font-size:19.25px;color:#24292e;-webkit-text-stroke:0.5px #24292e;top:749.9px;left:398.8px;transform-origin:0 50%;transform:scaleX(0.967);">Primary</span>
<div class="gr" style="left:130.7px;top:784.5px;width:344.4px;height:40.0px;border-radius:3px;"></div>
<span class="t" style="font-size:19.25px;color:#fff;top:794.7px;left:142.0px;transform-origin:0 50%;transform:scaleX(0.984);">Mode</span>
<span class="t" style="font-size:19.25px;color:#fff;-webkit-text-stroke:0.5px #fff;top:794.7px;left:403.3px;transform-origin:0 50%;transform:scaleX(0.987);">Normal</span>
<div class="bl" style="left:130.7px;top:830.0px;width:344.4px;height:40.0px;border-radius:3px;"></div>
<span class="t" style="font-size:19.25px;color:#fff;top:840.2px;left:142.1px;transform-origin:0 50%;transform:scaleX(0.942);">Policy</span>
<span class="t" style="font-size:19.25px;color:#fff;-webkit-text-stroke:0.5px #fff;top:840.2px;left:377.1px;">allkeys-lru</span>
<div class="bl" style="left:130.7px;top:875.0px;width:344.4px;height:40.0px;border-radius:3px;"></div>
<span class="t" style="font-size:19.25px;color:#fff;top:885.2px;left:142.1px;transform-origin:0 50%;transform:scaleX(0.884);">PID</span>
<span class="t" style="font-size:19.25px;color:#fff;-webkit-text-stroke:0.5px #fff;top:885.2px;left:432.1px;transform-origin:0 50%;transform:scaleX(0.993);">655</span>
<div class="bl" style="left:130.7px;top:919.6px;width:344.4px;height:40.0px;border-radius:3px;"></div>
<span class="t" style="font-size:19.25px;color:#fff;top:929.8px;left:143.0px;transform-origin:0 50%;transform:scaleX(0.948);">Version</span>
<span class="t" style="font-size:19.25px;color:#fff;-webkit-text-stroke:0.5px #fff;top:929.8px;left:424.6px;transform-origin:0 50%;transform:scaleX(0.917);">7.2.0</span>
<div class="bl" style="left:130.7px;top:964.2px;width:344.4px;height:40.0px;border-radius:3px;"></div>
<span class="t" style="font-size:19.25px;color:#fff;top:974.4px;left:142.0px;transform-origin:0 50%;transform:scaleX(0.967);">Port</span>
<span class="t" style="font-size:19.25px;color:#fff;-webkit-text-stroke:0.5px #fff;top:974.4px;left:422.8px;transform-origin:0 50%;transform:scaleX(0.962);">6501</span>
<div class="pn" style="left:489.0px;top:693.3px;width:345.0px;height:311.0px;"></div>
<span class="t" style="font-size:22.56px;color:#24292e;-webkit-text-stroke:0.45px #24292e;top:705.5px;left:501.0px;transform-origin:0 50%;transform:scaleX(1.009);">Replication</span>
<div class="gr" style="left:489.7px;top:740.3px;width:344.0px;height:263.5px;border-radius:0 0 3px 3px;"></div>
<span class="t" style="font-size:25.67px;color:#fff;-webkit-text-stroke:0.6px #fff;top:859.9px;left:510.3px;transform-origin:0 50%;transform:scaleX(1.010);">Leading 10.10.10.49:6501</span>
<div class="pn" style="left:848.0px;top:693.3px;width:345.3px;height:311.0px;"></div>
<span class="t" style="font-size:22.56px;color:#24292e;-webkit-text-stroke:0.45px #24292e;top:705.5px;left:860.3px;">Memory</span>
<div class="bl" style="left:848.7px;top:739.7px;width:344.2px;height:61.8px;border-radius:3px;"></div>
<span class="t" style="font-size:24.22px;color:#fff;top:758.3px;left:860.1px;transform-origin:0 50%;transform:scaleX(0.991);">Usage</span>
<span class="t" style="font-size:24.22px;color:#fff;-webkit-text-stroke:0.7px #fff;top:758.3px;left:1133.5px;transform-origin:0 50%;transform:scaleX(0.859);">1.5%</span>
<div class="bl" style="left:848.7px;top:807.6px;width:344.2px;height:61.8px;border-radius:3px;"></div>
<span class="t" style="font-size:24.22px;color:#fff;top:826.2px;left:860.1px;transform-origin:0 50%;transform:scaleX(1.012);">Used</span>
<span class="t" style="font-size:24.22px;color:#fff;-webkit-text-stroke:0.7px #fff;top:826.2px;left:1076.3px;">982.4 KiB</span>
<div class="bl" style="left:848.7px;top:874.9px;width:344.2px;height:61.8px;border-radius:3px;"></div>
<span class="t" style="font-size:24.22px;color:#fff;top:893.5px;left:860.1px;transform-origin:0 50%;transform:scaleX(1.045);">Config</span>
<span class="t" style="font-size:24.22px;color:#fff;-webkit-text-stroke:0.7px #fff;top:893.5px;left:1108.1px;transform-origin:0 50%;transform:scaleX(0.975);">64 MiB</span>
<div class="bl" style="left:848.7px;top:942.2px;width:344.2px;height:61.8px;border-radius:3px;"></div>
<span class="t" style="font-size:24.22px;color:#fff;top:960.8px;left:860.1px;transform-origin:0 50%;transform:scaleX(1.007);">Node</span>
<span class="t" style="font-size:24.22px;color:#fff;-webkit-text-stroke:0.7px #fff;top:960.8px;left:1109.5px;transform-origin:0 50%;transform:scaleX(0.892);">1.8 GiB</span>
<div class="pn" style="left:1206.2px;top:693.3px;width:1063.5px;height:311.0px;"></div>
<span class="t" style="font-size:22.56px;color:#24292e;-webkit-text-stroke:0.45px #24292e;top:705.5px;left:1219.0px;transform-origin:0 50%;transform:scaleX(0.905);">QPS</span>
<span class="t" style="font-size:19.25px;color:#24292e;top:954.2px;left:1219.7px;transform-origin:0 50%;transform:scaleX(0.940);">0.0</span>
<span class="t" style="font-size:19.25px;color:#24292e;top:885.0px;left:1218.7px;transform-origin:0 50%;transform:scaleX(0.978);">1.0</span>
<span class="t" style="font-size:19.25px;color:#24292e;top:815.7px;left:1219.7px;transform-origin:0 50%;transform:scaleX(0.940);">2.0</span>
<span class="t" style="font-size:19.25px;color:#24292e;top:977.1px;left:1302.2px;transform-origin:0 50%;transform:scaleX(0.930);">14:50</span>
<span class="t" style="font-size:19.25px;color:#24292e;top:977.1px;left:1421.7px;transform-origin:0 50%;transform:scaleX(0.930);">15:00</span>
<span class="t" style="font-size:19.25px;color:#24292e;top:977.1px;left:1541.1px;transform-origin:0 50%;transform:scaleX(0.930);">15:10</span>
<span class="t" style="font-size:19.25px;color:#24292e;top:977.1px;left:1660.3px;transform-origin:0 50%;transform:scaleX(0.930);">15:20</span>
<span class="t" style="font-size:19.25px;color:#24292e;top:977.1px;left:1779.7px;transform-origin:0 50%;transform:scaleX(0.930);">15:30</span>
<span class="t" style="font-size:19.25px;color:#24292e;top:977.1px;left:1899.1px;transform-origin:0 50%;transform:scaleX(0.930);">15:40</span>
<svg style="left:1257.3px;top:759.5px" width="714.2" height="204.0" viewBox="0 0 714.2 204" ><path d="M0 204 L0 23.9 L50.5 23.9 L52.5 25.5 L60.5 25.5 L62.5 23.9 L123.7 23.9 L125.7 25.5 L133.7 25.5 L135.7 23.9 L196.9 23.9 L198.9 25.5 L206.9 25.5 L208.9 23.9 L270.1 23.9 L272.1 25.5 L280.1 25.5 L282.1 23.9 L343.3 23.9 L345.3 25.5 L353.3 25.5 L355.3 23.9 L416.5 23.9 L418.5 25.5 L426.5 25.5 L428.5 23.9 L489.7 23.9 L491.7 25.5 L499.7 25.5 L501.7 23.9 L562.9 23.9 L564.9 25.5 L572.9 25.5 L574.9 23.9 L636.1 23.9 L638.1 25.5 L646.1 25.5 L648.1 23.9 L714.2 23.9 L714.2 204 Z" fill="#a9bcdb"/><path d="M0 204 L0 37.8 L50.5 37.8 L52.5 39.4 L60.5 39.4 L62.5 37.8 L123.7 37.8 L125.7 39.4 L133.7 39.4 L135.7 37.8 L196.9 37.8 L198.9 39.4 L206.9 39.4 L208.9 37.8 L270.1 37.8 L272.1 39.4 L280.1 39.4 L282.1 37.8 L343.3 37.8 L345.3 39.4 L353.3 39.4 L355.3 37.8 L416.5 37.8 L418.5 39.4 L426.5 39.4 L428.5 37.8 L489.7 37.8 L491.7 39.4 L499.7 39.4 L501.7 37.8 L562.9 37.8 L564.9 39.4 L572.9 39.4 L574.9 37.8 L636.1 37.8 L638.1 39.4 L646.1 39.4 L648.1 37.8 L714.2 37.8 L714.2 204 Z" fill="#f4e09a"/><path d="M0 204 L0 51.6 L50.5 51.6 L52.5 53.2 L60.5 53.2 L62.5 51.6 L123.7 51.6 L125.7 53.2 L133.7 53.2 L135.7 51.6 L196.9 51.6 L198.9 53.2 L206.9 53.2 L208.9 51.6 L270.1 51.6 L272.1 53.2 L280.1 53.2 L282.1 51.6 L343.3 51.6 L345.3 53.2 L353.3 53.2 L355.3 51.6 L416.5 51.6 L418.5 53.2 L426.5 53.2 L428.5 51.6 L489.7 51.6 L491.7 53.2 L499.7 53.2 L501.7 51.6 L562.9 51.6 L564.9 53.2 L572.9 53.2 L574.9 51.6 L636.1 51.6 L638.1 53.2 L646.1 53.2 L648.1 51.6 L714.2 51.6 L714.2 204 Z" fill="#9ab591"/><path d="M0 204 L0 120.9 L50.5 120.9 L52.5 120.9 L60.5 120.9 L62.5 120.9 L123.7 120.9 L125.7 120.9 L133.7 120.9 L135.7 120.9 L196.9 120.9 L198.9 120.9 L206.9 120.9 L208.9 120.9 L270.1 120.9 L272.1 120.9 L280.1 120.9 L282.1 120.9 L343.3 120.9 L345.3 120.9 L353.3 120.9 L355.3 120.9 L416.5 120.9 L418.5 120.9 L426.5 120.9 L428.5 120.9 L489.7 120.9 L491.7 120.9 L499.7 120.9 L501.7 120.9 L562.9 120.9 L564.9 120.9 L572.9 120.9 L574.9 120.9 L636.1 120.9 L638.1 120.9 L646.1 120.9 L648.1 120.9 L714.2 120.9 L714.2 204 Z" fill="#a3b3e9"/><path d="M0 204 L0 134.8 L50.5 134.8 L52.5 134.8 L60.5 134.8 L62.5 134.8 L123.7 134.8 L125.7 134.8 L133.7 134.8 L135.7 134.8 L196.9 134.8 L198.9 134.8 L206.9 134.8 L208.9 134.8 L270.1 134.8 L272.1 134.8 L280.1 134.8 L282.1 134.8 L343.3 134.8 L345.3 134.8 L353.3 134.8 L355.3 134.8 L416.5 134.8 L418.5 134.8 L426.5 134.8 L428.5 134.8 L489.7 134.8 L491.7 134.8 L499.7 134.8 L501.7 134.8 L562.9 134.8 L564.9 134.8 L572.9 134.8 L574.9 134.8 L636.1 134.8 L638.1 134.8 L646.1 134.8 L648.1 134.8 L714.2 134.8 L714.2 204 Z" fill="#e5a2a3"/><path d="M0 204 L0 148.6 L50.5 148.6 L52.5 148.6 L60.5 148.6 L62.5 148.6 L123.7 148.6 L125.7 148.6 L133.7 148.6 L135.7 148.6 L196.9 148.6 L198.9 148.6 L206.9 148.6 L208.9 148.6 L270.1 148.6 L272.1 148.6 L280.1 148.6 L282.1 148.6 L343.3 148.6 L345.3 148.6 L353.3 148.6 L355.3 148.6 L416.5 148.6 L418.5 148.6 L426.5 148.6 L428.5 148.6 L489.7 148.6 L491.7 148.6 L499.7 148.6 L501.7 148.6 L562.9 148.6 L564.9 148.6 L572.9 148.6 L574.9 148.6 L636.1 148.6 L638.1 148.6 L646.1 148.6 L648.1 148.6 L714.2 148.6 L714.2 204 Z" fill="#f1b594"/><path d="M0 204 L0 162.4 L50.5 162.4 L52.5 162.4 L60.5 162.4 L62.5 162.4 L123.7 162.4 L125.7 162.4 L133.7 162.4 L135.7 162.4 L196.9 162.4 L198.9 162.4 L206.9 162.4 L208.9 162.4 L270.1 162.4 L272.1 162.4 L280.1 162.4 L282.1 162.4 L343.3 162.4 L345.3 162.4 L353.3 162.4 L355.3 162.4 L416.5 162.4 L418.5 162.4 L426.5 162.4 L428.5 162.4 L489.7 162.4 L491.7 162.4 L499.7 162.4 L501.7 162.4 L562.9 162.4 L564.9 162.4 L572.9 162.4 L574.9 162.4 L636.1 162.4 L638.1 162.4 L646.1 162.4 L648.1 162.4 L714.2 162.4 L714.2 204 Z" fill="#b0c5f1"/><path d="M0 204 L0 176.3 L50.5 176.3 L52.5 176.3 L60.5 176.3 L62.5 176.3 L123.7 176.3 L125.7 176.3 L133.7 176.3 L135.7 176.3 L196.9 176.3 L198.9 176.3 L206.9 176.3 L208.9 176.3 L270.1 176.3 L272.1 176.3 L280.1 176.3 L282.1 176.3 L343.3 176.3 L345.3 176.3 L353.3 176.3 L355.3 176.3 L416.5 176.3 L418.5 176.3 L426.5 176.3 L428.5 176.3 L489.7 176.3 L491.7 176.3 L499.7 176.3 L501.7 176.3 L562.9 176.3 L564.9 176.3 L572.9 176.3 L574.9 176.3 L636.1 176.3 L638.1 176.3 L646.1 176.3 L648.1 176.3 L714.2 176.3 L714.2 204 Z" fill="#ebd6a0"/><path d="M0 204 L0 190.2 L50.5 190.2 L52.5 190.2 L60.5 190.2 L62.5 190.2 L123.7 190.2 L125.7 190.2 L133.7 190.2 L135.7 190.2 L196.9 190.2 L198.9 190.2 L206.9 190.2 L208.9 190.2 L270.1 190.2 L272.1 190.2 L280.1 190.2 L282.1 190.2 L343.3 190.2 L345.3 190.2 L353.3 190.2 L355.3 190.2 L416.5 190.2 L418.5 190.2 L426.5 190.2 L428.5 190.2 L489.7 190.2 L491.7 190.2 L499.7 190.2 L501.7 190.2 L562.9 190.2 L564.9 190.2 L572.9 190.2 L574.9 190.2 L636.1 190.2 L638.1 190.2 L646.1 190.2 L648.1 190.2 L714.2 190.2 L714.2 204 Z" fill="#b1ccab"/><path d="M67.4 0V204" stroke="rgba(36,41,46,0.035)" stroke-width="1.3"/><path d="M186.9 0V204" stroke="rgba(36,41,46,0.035)" stroke-width="1.3"/><path d="M306.3 0V204" stroke="rgba(36,41,46,0.035)" stroke-width="1.3"/><path d="M425.5 0V204" stroke="rgba(36,41,46,0.035)" stroke-width="1.3"/><path d="M544.9 0V204" stroke="rgba(36,41,46,0.035)" stroke-width="1.3"/><path d="M664.3 0V204" stroke="rgba(36,41,46,0.035)" stroke-width="1.3"/><path d="M0 204.0H714.2" stroke="rgba(36,41,46,0.035)" stroke-width="1.3"/><path d="M0 134.8H714.2" stroke="rgba(36,41,46,0.035)" stroke-width="1.3"/><path d="M0 65.5H714.2" stroke="rgba(36,41,46,0.035)" stroke-width="1.3"/></svg>
<span class="t" style="font-size:19.25px;color:#2f5fd3;-webkit-text-stroke:0.4px #2f5fd3;top:757.8px;left:2196.6px;transform-origin:0 50%;transform:scaleX(0.995);">Last *</span>
<div style="left:1984.0px;top:783.0px;width:274.5px;height:1.6px;background:#d6d8da;"></div>
<div style="left:1995.4px;top:797.9px;width:20.0px;height:5.4px;background:#5a9b50;border-radius:2.7px;"></div>
<span class="t" style="font-size:19.25px;color:#24292e;top:791.5px;left:2026.3px;transform-origin:0 50%;transform:scaleX(0.990);">auth</span>
<span class="t" style="font-size:19.25px;color:#24292e;top:791.5px;left:2221.3px;transform-origin:0 50%;transform:scaleX(0.960);">0.2</span>
<div style="left:1984.0px;top:817.7px;width:274.5px;height:1.6px;background:#d6d8da;"></div>
<div style="left:1995.4px;top:832.1px;width:20.0px;height:5.4px;background:#dba92f;border-radius:2.7px;"></div>
<span class="t" style="font-size:19.25px;color:#24292e;top:825.7px;left:2026.3px;transform-origin:0 50%;transform:scaleX(0.984);">client|setname</span>
<span class="t" style="font-size:19.25px;color:#24292e;top:825.7px;left:2221.3px;transform-origin:0 50%;transform:scaleX(0.960);">0.2</span>
<div style="left:1984.0px;top:851.9px;width:274.5px;height:1.6px;background:#d6d8da;"></div>
<div style="left:1995.4px;top:866.3px;width:20.0px;height:5.4px;background:#6b96eb;border-radius:2.7px;"></div>
<span class="t" style="font-size:19.25px;color:#24292e;top:859.9px;left:2026.3px;transform-origin:0 50%;transform:scaleX(1.005);">config|get</span>
<span class="t" style="font-size:19.25px;color:#24292e;top:859.9px;left:2221.3px;transform-origin:0 50%;transform:scaleX(0.960);">0.2</span>
<div style="left:1984.0px;top:886.1px;width:274.5px;height:1.6px;background:#d6d8da;"></div>
<div style="left:1995.4px;top:900.5px;width:20.0px;height:5.4px;background:#e8692a;border-radius:2.7px;"></div>
<span class="t" style="font-size:19.25px;color:#24292e;top:894.1px;left:2025.3px;transform-origin:0 50%;transform:scaleX(1.036);">info</span>
<span class="t" style="font-size:19.25px;color:#24292e;top:894.1px;left:2221.3px;transform-origin:0 50%;transform:scaleX(0.960);">0.2</span>
<div style="left:1984.0px;top:920.3px;width:274.5px;height:1.6px;background:#d6d8da;"></div>
<div style="left:1995.4px;top:934.7px;width:20.0px;height:5.4px;background:#ca3c47;border-radius:2.7px;"></div>
<span class="t" style="font-size:19.25px;color:#24292e;top:928.3px;left:2025.3px;transform-origin:0 50%;transform:scaleX(0.991);">latency|histogram</span>
<span class="t" style="font-size:19.25px;color:#24292e;top:928.3px;left:2221.3px;transform-origin:0 50%;transform:scaleX(0.960);">0.2</span>
<div style="left:1984.0px;top:954.5px;width:274.5px;height:1.6px;background:#d6d8da;"></div>
<div style="left:1995.4px;top:968.9px;width:20.0px;height:5.4px;background:#3b64d0;border-radius:2.7px;"></div>
<span class="t" style="font-size:19.25px;color:#24292e;top:962.5px;left:2025.3px;">latency|latest</span>
<span class="t" style="font-size:19.25px;color:#24292e;top:962.5px;left:2221.3px;transform-origin:0 50%;transform:scaleX(0.960);">0.2</span>
<div style="left:1984.0px;top:988.7px;width:274.5px;height:1.6px;background:#d6d8da;"></div>
<div class="bl" style="left:130.8px;top:1019.0px;width:344.2px;height:201.0px;border-radius:3px;overflow:hidden;"></div>
<span class="t" style="font-size:25.15px;color:#fff;top:1037.5px;left:148.0px;transform-origin:0 50%;transform:scaleX(0.980);">CPU</span>
<span class="t" style="font-size:75.5px;color:#fff;-webkit-text-stroke:1.5px #fff;top:1070.1px;left:149.5px;transform-origin:0 50%;transform:scaleX(1.035);">0.2</span>
<span class="t" style="font-size:45px;color:#fff;-webkit-text-stroke:1.0px #fff;top:1095.9px;left:260.2px;transform-origin:0 50%;transform:scaleX(0.800);">%</span>
<div class="bl" style="left:490.0px;top:1019.0px;width:343.7px;height:201.0px;border-radius:3px;overflow:hidden;"></div>
<span class="t" style="font-size:25.15px;color:#fff;top:1037.5px;left:505.3px;transform-origin:0 50%;transform:scaleX(1.075);">Memory</span>
<span class="t" style="font-size:75.5px;color:#fff;-webkit-text-stroke:1.5px #fff;top:1070.1px;left:505.4px;transform-origin:0 50%;transform:scaleX(0.918);">1.5</span>
<span class="t" style="font-size:45px;color:#fff;-webkit-text-stroke:1.0px #fff;top:1095.9px;left:605.9px;transform-origin:0 50%;transform:scaleX(0.800);">%</span>
<div class="bl" style="left:848.9px;top:1019.0px;width:343.6px;height:201.0px;border-radius:3px;overflow:hidden;"><div style="left:0;top:117.6px;width:100%;height:90px;background:rgba(255,255,255,0.42);border-top:1px solid rgba(255,255,255,0.2)"></div></div>
<span class="t" style="font-size:25.15px;color:#fff;top:1037.5px;left:865.1px;transform-origin:0 50%;transform:scaleX(0.972);">QPS</span>
<span class="t" style="font-size:75.5px;color:#fff;-webkit-text-stroke:1.5px #fff;top:1070.1px;left:867.7px;transform-origin:0 50%;transform:scaleX(1.006);">2.6</span>
<div class="bl" style="left:1207.8px;top:1019.0px;width:343.6px;height:201.0px;border-radius:3px;overflow:hidden;"><div style="left:0;top:117.6px;width:100%;height:90px;background:rgba(255,255,255,0.42);border-top:1px solid rgba(255,255,255,0.2)"></div></div>
<span class="t" style="font-size:25.15px;color:#fff;top:1037.5px;left:1223.8px;transform-origin:0 50%;transform:scaleX(1.077);">Clients</span>
<span class="t" style="font-size:75.5px;color:#fff;-webkit-text-stroke:1.5px #fff;top:1070.1px;left:1224.2px;transform-origin:0 50%;transform:scaleX(0.800);">1</span>
<div style="left:1565.9px;top:1019.0px;width:344.6px;height:201.0px;border-radius:3px;overflow:hidden;background:linear-gradient(105deg,#f0c89a 0%,#ecb48d 50%,#e89f84 100%);"><svg style="left:0;top:0" width="344.8" height="201" viewBox="0 0 344.8 201"><path d="M0.0 123.4 L2.7 125.7 L5.3 124.6 L8.0 122.4 L10.6 123.7 L13.3 121.6 L15.9 120.5 L18.6 120.2 L21.2 124.6 L23.9 124.8 L26.5 119.4 L29.2 118.8 L31.8 119.9 L34.5 119.5 L37.1 121.4 L39.8 122.7 L42.4 123.2 L45.1 123.2 L47.7 126.0 L50.4 126.5 L53.0 123.9 L55.7 119.6 L58.4 123.2 L61.0 125.2 L63.7 126.7 L66.3 122.4 L69.0 125.2 L71.6 126.8 L74.3 122.8 L76.9 124.7 L79.6 121.9 L82.2 125.3 L84.9 122.4 L87.5 118.0 L90.2 122.6 L92.8 123.5 L95.5 121.9 L98.1 120.9 L100.8 120.4 L103.4 120.7 L106.1 124.7 L108.7 123.1 L111.4 121.9 L114.0 124.7 L116.7 122.0 L119.4 121.4 L122.0 124.0 L124.7 119.7 L127.3 119.7 L130.0 120.5 L132.6 121.5 L135.3 125.1 L137.9 124.6 L140.6 122.4 L143.2 125.2 L145.9 123.0 L148.5 124.6 L151.2 122.5 L153.8 125.1 L156.5 123.9 L159.1 121.3 L161.8 121.2 L164.4 121.3 L167.1 123.0 L169.7 121.7 L172.4 120.5 L175.1 122.5 L177.7 123.7 L180.4 125.8 L183.0 122.1 L185.7 119.6 L188.3 120.1 L191.0 122.4 L193.6 122.3 L196.3 125.5 L198.9 125.5 L201.6 119.6 L204.2 119.3 L206.9 122.7 L209.5 120.7 L212.2 122.2 L214.8 122.0 L217.5 120.7 L220.1 123.5 L222.8 124.8 L225.4 125.7 L228.1 123.8 L230.8 125.8 L233.4 124.1 L236.1 125.7 L238.7 125.2 L241.4 124.8 L244.0 121.9 L246.7 125.4 L249.3 125.6 L252.0 125.7 L254.6 124.2 L257.3 121.7 L259.9 120.3 L262.6 122.0 L265.2 123.9 L267.9 124.3 L270.5 119.7 L273.2 120.8 L275.8 120.8 L278.5 124.4 L281.1 123.7 L283.8 122.7 L286.4 121.6 L289.1 124.3 L291.8 125.9 L294.4 125.1 L297.1 122.4 L299.7 124.8 L302.4 125.2 L305.0 123.2 L307.7 123.2 L310.3 121.9 L313.0 123.5 L315.6 122.6 L318.3 125.7 L320.9 119.3 L323.6 120.6 L326.2 123.3 L328.9 122.5 L331.5 120.6 L334.2 119.0 L336.8 123.3 L339.5 118.6 L342.1 122.0 L344.8 123.6 L344.8 201 L0 201 Z" fill="rgba(255,255,255,0.42)"/><path d="M0.0 123.4 L2.7 125.7 L5.3 124.6 L8.0 122.4 L10.6 123.7 L13.3 121.6 L15.9 120.5 L18.6 120.2 L21.2 124.6 L23.9 124.8 L26.5 119.4 L29.2 118.8 L31.8 119.9 L34.5 119.5 L37.1 121.4 L39.8 122.7 L42.4 123.2 L45.1 123.2 L47.7 126.0 L50.4 126.5 L53.0 123.9 L55.7 119.6 L58.4 123.2 L61.0 125.2 L63.7 126.7 L66.3 122.4 L69.0 125.2 L71.6 126.8 L74.3 122.8 L76.9 124.7 L79.6 121.9 L82.2 125.3 L84.9 122.4 L87.5 118.0 L90.2 122.6 L92.8 123.5 L95.5 121.9 L98.1 120.9 L100.8 120.4 L103.4 120.7 L106.1 124.7 L108.7 123.1 L111.4 121.9 L114.0 124.7 L116.7 122.0 L119.4 121.4 L122.0 124.0 L124.7 119.7 L127.3 119.7 L130.0 120.5 L132.6 121.5 L135.3 125.1 L137.9 124.6 L140.6 122.4 L143.2 125.2 L145.9 123.0 L148.5 124.6 L151.2 122.5 L153.8 125.1 L156.5 123.9 L159.1 121.3 L161.8 121.2 L164.4 121.3 L167.1 123.0 L169.7 121.7 L172.4 120.5 L175.1 122.5 L177.7 123.7 L180.4 125.8 L183.0 122.1 L185.7 119.6 L188.3 120.1 L191.0 122.4 L193.6 122.3 L196.3 125.5 L198.9 125.5 L201.6 119.6 L204.2 119.3 L206.9 122.7 L209.5 120.7 L212.2 122.2 L214.8 122.0 L217.5 120.7 L220.1 123.5 L222.8 124.8 L225.4 125.7 L228.1 123.8 L230.8 125.8 L233.4 124.1 L236.1 125.7 L238.7 125.2 L241.4 124.8 L244.0 121.9 L246.7 125.4 L249.3 125.6 L252.0 125.7 L254.6 124.2 L257.3 121.7 L259.9 120.3 L262.6 122.0 L265.2 123.9 L267.9 124.3 L270.5 119.7 L273.2 120.8 L275.8 120.8 L278.5 124.4 L281.1 123.7 L283.8 122.7 L286.4 121.6 L289.1 124.3 L291.8 125.9 L294.4 125.1 L297.1 122.4 L299.7 124.8 L302.4 125.2 L305.0 123.2 L307.7 123.2 L310.3 121.9 L313.0 123.5 L315.6 122.6 L318.3 125.7 L320.9 119.3 L323.6 120.6 L326.2 123.3 L328.9 122.5 L331.5 120.6 L334.2 119.0 L336.8 123.3 L339.5 118.6 L342.1 122.0 L344.8 123.6" fill="none" stroke="#fdf0c2" stroke-width="1.6" stroke-linejoin="round"/></svg></div>
<span class="t" style="font-size:25.15px;color:#1f2126;top:1037.5px;left:1582.1px;transform-origin:0 50%;transform:scaleX(0.967);">RT</span>
<span class="t" style="font-size:75.5px;color:#1f2126;-webkit-text-stroke:1.5px #1f2126;top:1070.1px;left:1585.3px;transform-origin:0 50%;transform:scaleX(1.022);">52.2</span>
<span class="t" style="font-size:46px;color:#1f2126;-webkit-text-stroke:1.0px #1f2126;top:1095.1px;left:1749.8px;transform-origin:0 50%;transform:scaleX(1.013);">µs</span>
<div style="left:1925.0px;top:1019.0px;width:344.3px;height:201.0px;border-radius:3px;overflow:hidden;background:linear-gradient(105deg,#e9d869 0%,#e6c45a 50%,#e2aa50 100%);"><div style="left:0;top:112.3px;width:100%;height:90px;background:rgba(255,255,255,0.42);"></div></div>
<span class="t" style="font-size:25.15px;color:#1f2126;top:1037.5px;left:1942.0px;transform-origin:0 50%;transform:scaleX(1.073);">Uptime</span>
<span class="t" style="font-size:71.5px;color:#1f2126;-webkit-text-stroke:1.5px #1f2126;top:1069.8px;left:1940.0px;transform-origin:0 50%;transform:scaleX(0.986);">13.8</span>
<span class="t" style="font-size:44px;color:#1f2126;-webkit-text-stroke:1.0px #1f2126;top:1093.1px;left:2088.3px;transform-origin:0 50%;transform:scaleX(1.006);">hour</span>
<div class="gr" style="left:130.8px;top:1235.2px;width:344.2px;height:200.8px;border-radius:3px;"></div>
<span class="t" style="font-size:25.15px;color:#fff;top:1254.3px;left:146.4px;transform-origin:0 50%;transform:scaleX(1.079);">Firing Alert</span>
<span class="t" style="font-size:75.5px;color:#fff;-webkit-text-stroke:1.5px #fff;top:1285.9px;left:149.2px;transform-origin:0 50%;transform:scaleX(1.039);">0</span>
<div class="gr" style="left:490.0px;top:1235.2px;width:343.7px;height:200.8px;border-radius:3px;"></div>
<span class="t" style="font-size:140.5px;color:#fff;-webkit-text-stroke:5px #fff;top:1268.4px;left:566.4px;transform-origin:0 50%;transform:scaleX(0.930);">OK</span>
<div class="pn" style="left:848.0px;top:1234.5px;width:1421.7px;height:202.3px;"></div>
<span class="t" style="font-size:26.91px;color:#5a5e63;top:1322.8px;left:1506.6px;transform-origin:0 50%;transform:scaleX(1.077);">No data</span>
<div style="left:130.8px;top:1452.1px;width:2138.4px;height:146.4px;background:#fff;border-radius:3px;"></div>
<div class="gr" style="left:130.8px;top:1452.1px;width:233.0px;height:146.4px;border-radius:2px;overflow:hidden;"></div>
<span class="t" style="font-size:19.35px;color:#fff;-webkit-text-stroke:0.3px #fff;top:1471.2px;left:148.3px;transform-origin:0 50%;transform:scaleX(1.046);">Cluster</span>
<span class="t" style="font-size:45px;color:#fff;-webkit-text-stroke:1.3px #fff;top:1494.0px;left:146.1px;transform-origin:0 50%;transform:scaleX(1.080);">Enabled</span>
<div class="gr" style="left:369.0px;top:1452.1px;width:233.0px;height:146.4px;border-radius:2px;overflow:hidden;"></div>
<span class="t" style="font-size:19.35px;color:#fff;-webkit-text-stroke:0.3px #fff;top:1471.2px;left:386.5px;transform-origin:0 50%;transform:scaleX(1.061);">Status</span>
<span class="t" style="font-size:45px;color:#fff;-webkit-text-stroke:1.3px #fff;top:1494.0px;left:385.6px;transform-origin:0 50%;transform:scaleX(0.972);">OK</span>
<div class="gr" style="left:607.3px;top:1452.1px;width:233.0px;height:146.4px;border-radius:2px;overflow:hidden;"></div>
<span class="t" style="font-size:19.35px;color:#fff;-webkit-text-stroke:0.3px #fff;top:1471.2px;left:624.7px;transform-origin:0 50%;transform:scaleX(1.035);">Shards</span>
<span class="t" style="font-size:45px;color:#fff;-webkit-text-stroke:1.3px #fff;top:1494.0px;left:623.5px;transform-origin:0 50%;transform:scaleX(1.177);">9</span>
<div class="gr" style="left:845.5px;top:1452.1px;width:233.0px;height:146.4px;border-radius:2px;overflow:hidden;"></div>
<span class="t" style="font-size:19.35px;color:#fff;-webkit-text-stroke:0.3px #fff;top:1471.2px;left:861.9px;transform-origin:0 50%;transform:scaleX(1.067);">Instances</span>
<span class="t" style="font-size:45px;color:#fff;-webkit-text-stroke:1.3px #fff;top:1494.0px;left:862.7px;transform-origin:0 50%;transform:scaleX(0.971);">18</span>
<div class="gr" style="left:1083.8px;top:1452.1px;width:233.0px;height:146.4px;border-radius:2px;overflow:hidden;"></div>
<span class="t" style="font-size:19.35px;color:#fff;-webkit-text-stroke:0.3px #fff;top:1471.2px;left:1100.2px;transform-origin:0 50%;transform:scaleX(1.044);">Epoch</span>
<span class="t" style="font-size:45px;color:#fff;-webkit-text-stroke:1.3px #fff;top:1494.0px;left:1100.1px;transform-origin:0 50%;transform:scaleX(1.119);">20</span>
<div class="gr" style="left:1322.0px;top:1452.1px;width:233.0px;height:146.4px;border-radius:2px;overflow:hidden;"></div>
<span class="t" style="font-size:19.35px;color:#fff;-webkit-text-stroke:0.3px #fff;top:1471.2px;left:1338.4px;transform-origin:0 50%;transform:scaleX(1.051);">Epoch Min</span>
<span class="t" style="font-size:45px;color:#fff;-webkit-text-stroke:1.3px #fff;top:1494.0px;left:1339.7px;transform-origin:0 50%;transform:scaleX(0.800);">1</span>
<div class="gr" style="left:1560.2px;top:1452.1px;width:233.0px;height:146.4px;border-radius:2px;overflow:hidden;"><div style="left:0;top:76.6px;width:100%;height:80px;background:rgba(255,255,255,0.40);"></div></div>
<span class="t" style="font-size:19.35px;color:#fff;-webkit-text-stroke:0.3px #fff;top:1471.2px;left:1577.7px;transform-origin:0 50%;transform:scaleX(1.048);">Slot Assigned</span>
<span class="t" style="font-size:45px;color:#fff;-webkit-text-stroke:1.3px #fff;top:1494.0px;left:1577.0px;transform-origin:0 50%;transform:scaleX(1.099);">16384</span>
<div class="gr" style="left:1798.5px;top:1452.1px;width:233.0px;height:146.4px;border-radius:2px;overflow:hidden;"><div style="left:0;top:76.6px;width:100%;height:80px;background:rgba(255,255,255,0.40);"></div></div>
<span class="t" style="font-size:19.35px;color:#fff;-webkit-text-stroke:0.3px #fff;top:1471.2px;left:1815.9px;transform-origin:0 50%;transform:scaleX(0.994);">Slot OK</span>
<span class="t" style="font-size:45px;color:#fff;-webkit-text-stroke:1.3px #fff;top:1494.0px;left:1815.2px;transform-origin:0 50%;transform:scaleX(1.097);">16384</span>
<div class="gr" style="left:2036.7px;top:1452.1px;width:233.0px;height:146.4px;border-radius:2px;overflow:hidden;"></div>
<span class="t" style="font-size:19.35px;color:#fff;-webkit-text-stroke:0.3px #fff;top:1471.2px;left:2054.2px;transform-origin:0 50%;transform:scaleX(1.025);">Slot Fail</span>
<span class="t" style="font-size:45px;color:#fff;-webkit-text-stroke:1.3px #fff;top:1494.0px;left:2054.2px;transform-origin:0 50%;transform:scaleX(1.073);">0</span>
<div style="left:128.8px;top:1611.8px;width:2142.5px;height:43.0px;background:#fff;border-radius:3px;"></div>
<svg style="left:144.5px;top:1625.4px" width="12.0" height="15.0" viewBox="0 0 12 15" ><path d="M3.5 3.2L8 7.5 3.5 11.8" fill="none" stroke="#24292e" stroke-width="1.9" stroke-linecap="round" stroke-linejoin="round"/></svg>
<span class="t" style="font-size:25.46px;color:#24292e;-webkit-text-stroke:0.6px #24292e;top:1619.8px;left:160.2px;transform-origin:0 50%;transform:scaleX(0.865);">OS</span>
<span class="t" style="font-size:19.04px;color:#5a5e63;font-style:italic;top:1625.5px;left:216.3px;transform-origin:0 50%;transform:scaleX(0.976);">(4 panels)</span>
<svg style="left:2253.4px;top:1620.7px" width="12.0" height="27.0" viewBox="0 0 12 27" ><rect x="0.4" y="0.5" width="3.4" height="3.4" fill="#24292e"/><rect x="0.4" y="8.05" width="3.4" height="3.4" fill="#24292e"/><rect x="0.4" y="15.6" width="3.4" height="3.4" fill="#24292e"/><rect x="0.4" y="23.15" width="3.4" height="3.4" fill="#24292e"/><rect x="8.2" y="0.5" width="3.4" height="3.4" fill="#24292e"/><rect x="8.2" y="8.05" width="3.4" height="3.4" fill="#24292e"/><rect x="8.2" y="15.6" width="3.4" height="3.4" fill="#24292e"/><rect x="8.2" y="23.15" width="3.4" height="3.4" fill="#24292e"/></svg>
<div style="left:128.8px;top:1665.9px;width:2142.5px;height:43.0px;background:#fff;border-radius:3px;"></div>
<svg style="left:144.5px;top:1679.5px" width="12.0" height="15.0" viewBox="0 0 12 15" ><path d="M3.5 3.2L8 7.5 3.5 11.8" fill="none" stroke="#24292e" stroke-width="1.9" stroke-linecap="round" stroke-linejoin="round"/></svg>
<span class="t" style="font-size:25.46px;color:#24292e;-webkit-text-stroke:0.6px #24292e;top:1673.9px;left:161.1px;transform-origin:0 50%;transform:scaleX(1.024);">Activity</span>
<span class="t" style="font-size:19.04px;color:#5a5e63;font-style:italic;top:1679.6px;left:268.5px;transform-origin:0 50%;transform:scaleX(0.973);">(8 panels)</span>
<svg style="left:2253.4px;top:1674.8px" width="12.0" height="27.0" viewBox="0 0 12 27" ><rect x="0.4" y="0.5" width="3.4" height="3.4" fill="#24292e"/><rect x="0.4" y="8.05" width="3.4" height="3.4" fill="#24292e"/><rect x="0.4" y="15.6" width="3.4" height="3.4" fill="#24292e"/><rect x="0.4" y="23.15" width="3.4" height="3.4" fill="#24292e"/><rect x="8.2" y="0.5" width="3.4" height="3.4" fill="#24292e"/><rect x="8.2" y="8.05" width="3.4" height="3.4" fill="#24292e"/><rect x="8.2" y="15.6" width="3.4" height="3.4" fill="#24292e"/><rect x="8.2" y="23.15" width="3.4" height="3.4" fill="#24292e"/></svg>
<div style="left:128.8px;top:1720.0px;width:2142.5px;height:43.0px;background:#fff;border-radius:3px;"></div>
<svg style="left:144.5px;top:1733.6px" width="12.0" height="15.0" viewBox="0 0 12 15" ><path d="M3.5 3.2L8 7.5 3.5 11.8" fill="none" stroke="#24292e" stroke-width="1.9" stroke-linecap="round" stroke-linejoin="round"/></svg>
<span class="t" style="font-size:25.46px;color:#24292e;-webkit-text-stroke:0.6px #24292e;top:1728.0px;left:160.1px;transform-origin:0 50%;transform:scaleX(0.967);">Session</span>
<span class="t" style="font-size:19.04px;color:#5a5e63;font-style:italic;top:1733.6px;left:270.8px;transform-origin:0 50%;transform:scaleX(0.973);">(6 panels)</span>
<svg style="left:2253.4px;top:1728.9px" width="12.0" height="27.0" viewBox="0 0 12 27" ><rect x="0.4" y="0.5" width="3.4" height="3.4" fill="#24292e"/><rect x="0.4" y="8.05" width="3.4" height="3.4" fill="#24292e"/><rect x="0.4" y="15.6" width="3.4" height="3.4" fill="#24292e"/><rect x="0.4" y="23.15" width="3.4" height="3.4" fill="#24292e"/><rect x="8.2" y="0.5" width="3.4" height="3.4" fill="#24292e"/><rect x="8.2" y="8.05" width="3.4" height="3.4" fill="#24292e"/><rect x="8.2" y="15.6" width="3.4" height="3.4" fill="#24292e"/><rect x="8.2" y="23.15" width="3.4" height="3.4" fill="#24292e"/></svg>
<div style="left:128.8px;top:1774.0px;width:2142.5px;height:43.0px;background:#fff;border-radius:3px;"></div>
<svg style="left:144.5px;top:1787.6px" width="12.0" height="15.0" viewBox="0 0 12 15" ><path d="M3.5 3.2L8 7.5 3.5 11.8" fill="none" stroke="#24292e" stroke-width="1.9" stroke-linecap="round" stroke-linejoin="round"/></svg>
<span class="t" style="font-size:25.46px;color:#24292e;-webkit-text-stroke:0.6px #24292e;top:1782.1px;left:159.2px;transform-origin:0 50%;transform:scaleX(0.972);">Database</span>
<span class="t" style="font-size:19.04px;color:#5a5e63;font-style:italic;top:1787.7px;left:289.3px;transform-origin:0 50%;transform:scaleX(0.973);">(6 panels)</span>
<svg style="left:2253.4px;top:1782.9px" width="12.0" height="27.0" viewBox="0 0 12 27" ><rect x="0.4" y="0.5" width="3.4" height="3.4" fill="#24292e"/><rect x="0.4" y="8.05" width="3.4" height="3.4" fill="#24292e"/><rect x="0.4" y="15.6" width="3.4" height="3.4" fill="#24292e"/><rect x="0.4" y="23.15" width="3.4" height="3.4" fill="#24292e"/><rect x="8.2" y="0.5" width="3.4" height="3.4" fill="#24292e"/><rect x="8.2" y="8.05" width="3.4" height="3.4" fill="#24292e"/><rect x="8.2" y="15.6" width="3.4" height="3.4" fill="#24292e"/><rect x="8.2" y="23.15" width="3.4" height="3.4" fill="#24292e"/></svg>
<div style="left:128.8px;top:1828.1px;width:2142.5px;height:43.0px;background:#fff;border-radius:3px;"></div>
<svg style="left:144.5px;top:1841.7px" width="12.0" height="15.0" viewBox="0 0 12 15" ><path d="M3.5 3.2L8 7.5 3.5 11.8" fill="none" stroke="#24292e" stroke-width="1.9" stroke-linecap="round" stroke-linejoin="round"/></svg>
<span class="t" style="font-size:25.46px;color:#24292e;-webkit-text-stroke:0.6px #24292e;top:1836.2px;left:159.1px;transform-origin:0 50%;transform:scaleX(0.992);">Persist</span>
<span class="t" style="font-size:19.04px;color:#5a5e63;font-style:italic;top:1841.8px;left:260.4px;transform-origin:0 50%;transform:scaleX(0.973);">(2 panels)</span>
<svg style="left:2253.4px;top:1837.0px" width="12.0" height="27.0" viewBox="0 0 12 27" ><rect x="0.4" y="0.5" width="3.4" height="3.4" fill="#24292e"/><rect x="0.4" y="8.05" width="3.4" height="3.4" fill="#24292e"/><rect x="0.4" y="15.6" width="3.4" height="3.4" fill="#24292e"/><rect x="0.4" y="23.15" width="3.4" height="3.4" fill="#24292e"/><rect x="8.2" y="0.5" width="3.4" height="3.4" fill="#24292e"/><rect x="8.2" y="8.05" width="3.4" height="3.4" fill="#24292e"/><rect x="8.2" y="15.6" width="3.4" height="3.4" fill="#24292e"/><rect x="8.2" y="23.15" width="3.4" height="3.4" fill="#24292e"/></svg>
<div style="left:128.8px;top:1882.2px;width:2142.5px;height:43.0px;background:#fff;border-radius:3px;"></div>
<svg style="left:144.5px;top:1895.8px" width="12.0" height="15.0" viewBox="0 0 12 15" ><path d="M3.5 3.2L8 7.5 3.5 11.8" fill="none" stroke="#24292e" stroke-width="1.9" stroke-linecap="round" stroke-linejoin="round"/></svg>
<span class="t" style="font-size:25.46px;color:#24292e;-webkit-text-stroke:0.6px #24292e;top:1890.2px;left:159.1px;transform-origin:0 50%;transform:scaleX(0.990);">Replication</span>
<span class="t" style="font-size:19.04px;color:#5a5e63;font-style:italic;top:1895.9px;left:307.0px;transform-origin:0 50%;transform:scaleX(0.973);">(2 panels)</span>
<svg style="left:2253.4px;top:1891.1px" width="12.0" height="27.0" viewBox="0 0 12 27" ><rect x="0.4" y="0.5" width="3.4" height="3.4" fill="#24292e"/><rect x="0.4" y="8.05" width="3.4" height="3.4" fill="#24292e"/><rect x="0.4" y="15.6" width="3.4" height="3.4" fill="#24292e"/><rect x="0.4" y="23.15" width="3.4" height="3.4" fill="#24292e"/><rect x="8.2" y="0.5" width="3.4" height="3.4" fill="#24292e"/><rect x="8.2" y="8.05" width="3.4" height="3.4" fill="#24292e"/><rect x="8.2" y="15.6" width="3.4" height="3.4" fill="#24292e"/><rect x="8.2" y="23.15" width="3.4" height="3.4" fill="#24292e"/></svg>
</div>
</body></html>
